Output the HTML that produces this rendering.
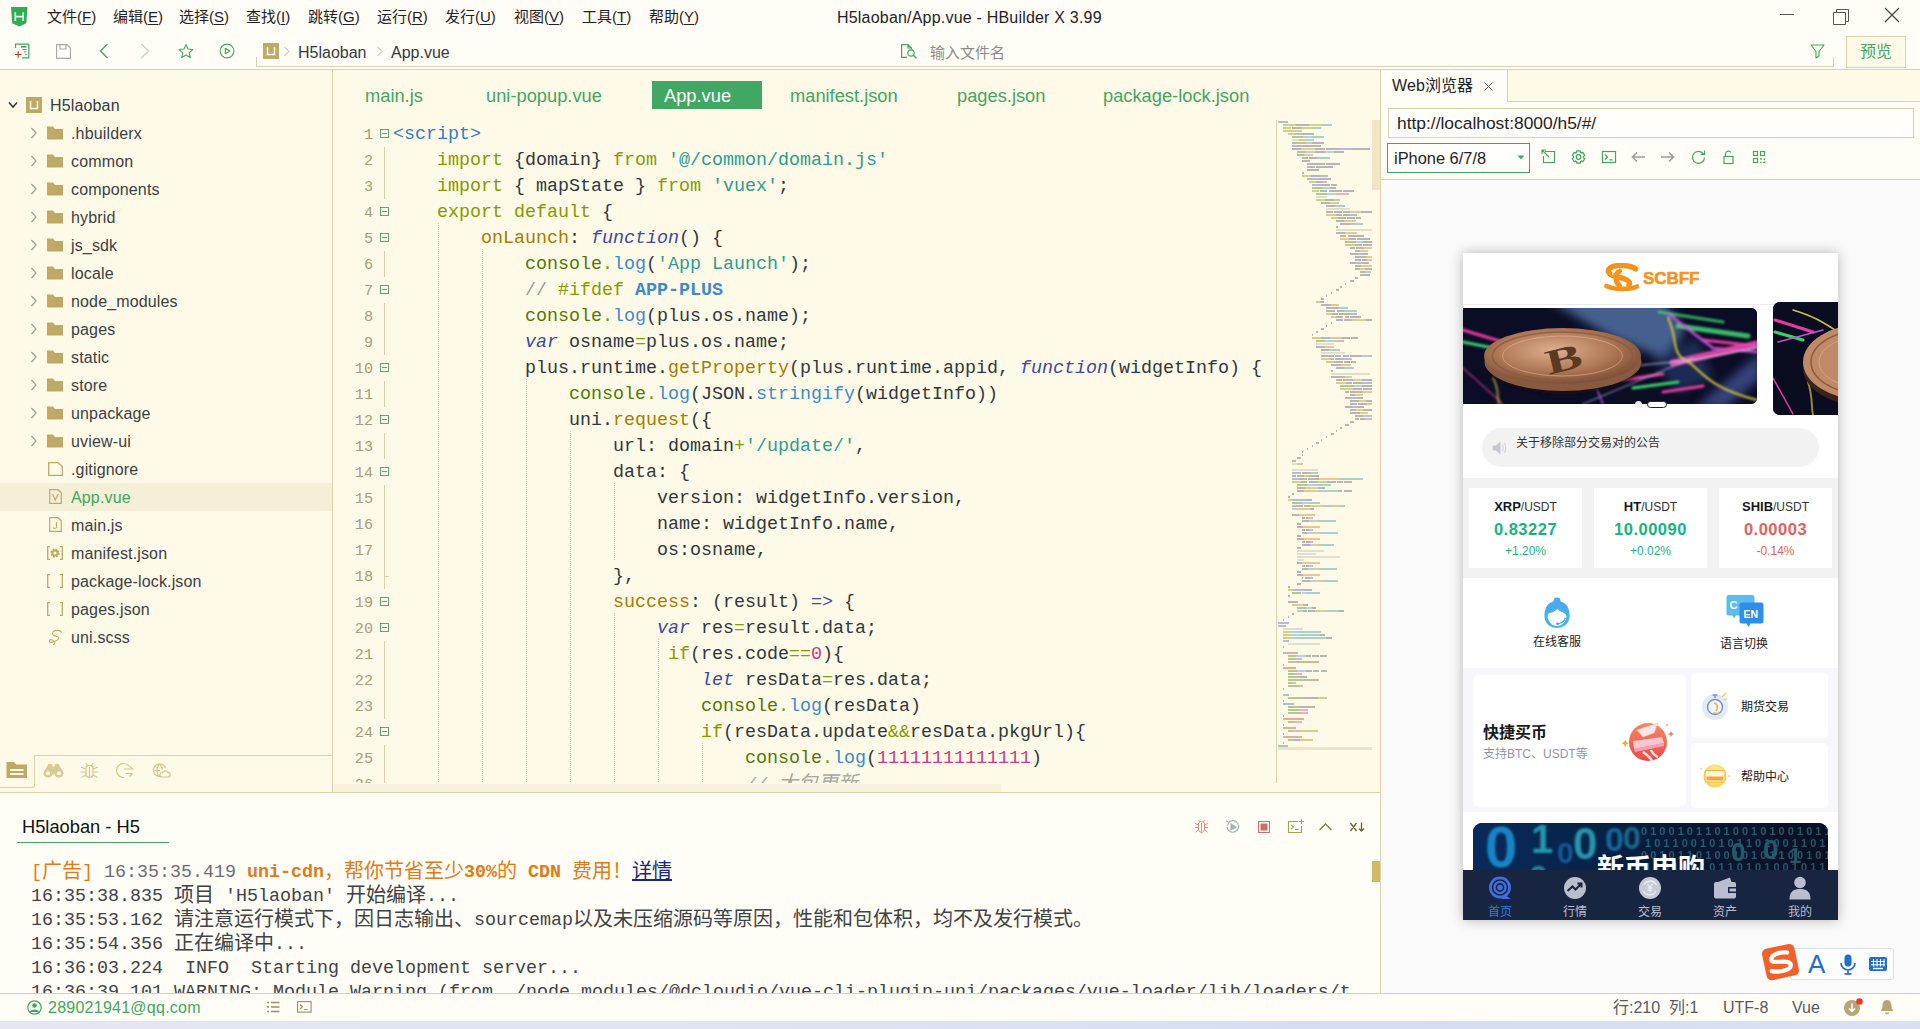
<!DOCTYPE html>
<html lang="zh-CN">
<head>
<meta charset="utf-8">
<title>H5laoban/App.vue - HBuilder X 3.99</title>
<style>
*{box-sizing:border-box}
html,body{margin:0;padding:0}
body{width:1920px;height:1029px;overflow:hidden;position:relative;background:#fffae8;font-family:"Liberation Sans","Noto Sans CJK SC",sans-serif;color:#333a3d}
.abs{position:absolute}
#top{position:absolute;left:0;top:0;width:1920px;height:69px;background:#fffdf6}
#topline{position:absolute;left:0;top:69px;width:1920px;height:1px;background:#dcd2aa}
.menu{position:absolute;top:6px;font-size:15px;line-height:22px;color:#1f2326;white-space:nowrap}
.menu u{text-decoration:underline;text-underline-offset:2px}
#title{position:absolute;top:7px;left:837px;font-size:16px;line-height:22px;color:#1f2326;letter-spacing:0.2px;white-space:nowrap}
.crumb{position:absolute;top:42px;font-size:16px;line-height:22px;color:#333a3d;white-space:nowrap}
/* sidebar */
#side{position:absolute;left:0;top:70px;width:332px;height:723px}
#sideline{position:absolute;left:332px;top:70px;width:1px;height:723px;background:#dcd2aa}
.tt{position:absolute;left:71px;height:28px;line-height:29px;font-size:16px;letter-spacing:0.15px;white-space:nowrap}
/* editor */
.tab{position:absolute;top:82px;height:27px;line-height:27px;font-size:18.3px;color:#3fa761;white-space:nowrap}
.ln{position:absolute;left:333px;width:40px;text-align:right;height:26px;line-height:27px;margin-top:3px;font-family:"Liberation Mono",monospace;font-size:15.2px;color:#a99c7c}
.cl{position:absolute;left:393px;height:26px;line-height:26px;margin-top:3px;font-family:"Liberation Mono","Noto Sans CJK SC",monospace;font-size:18.33px;color:#2e383c;white-space:pre}
.fb{position:absolute;left:380px;width:9px;height:9px;border:1px solid #55a873;background:#fffae8}
.fb:after{content:"";position:absolute;left:1px;top:3px;width:5px;height:1px;background:#55a873}
.fv{position:absolute;left:384px;width:1px;height:26px;background:#d9d0b0}
.ig{position:absolute;width:1px;height:26px;background-image:linear-gradient(#c9c6bb 50%,transparent 50%);background-size:1px 2px}
.k{color:#859900}.s{color:#2a9d8f}.f{color:#3a8bd0}.p{color:#a67c00}.i{color:#3b48a6;font-style:italic}.n{color:#d33682}.c{color:#9c9c94}.g{color:#4f7a05}.o{color:#859900}.t{color:#2f7fc4}.b{color:#3a8bd0;font-weight:bold}
.c2{color:#a8a8a0;font-style:italic}.c2z{color:#a8a8a0;font-style:italic;font-size:20px}
.tk{position:absolute;top:235px;width:113px;height:80px;background:#fff;text-align:center;white-space:nowrap}
.tk .t1{position:absolute;left:0;width:113px;top:10px;font-size:12px;line-height:18px;color:#333}
.tk .t1 b{font-size:13px;color:#15171f}
.tk .t2{position:absolute;left:0;width:113px;top:30px;font-size:16.500px;line-height:22px;font-weight:bold;letter-spacing:0.5px}
.tk .t3{position:absolute;left:0;width:113px;top:55px;font-size:12px;line-height:16px}
.tbl{position:absolute;top:651px;width:60px;text-align:center;font-size:12px;line-height:16px;color:#b9bfcc}
.cs{position:absolute;left:31px;height:24px;line-height:24px;font-family:"Liberation Mono","Noto Sans CJK SC",monospace;font-size:18.330px;color:#3e4346;white-space:pre}
.cs .z{font-size:20px;line-height:0;position:relative;top:1px}
</style>
</head>
<body>
<!-- ======= title bar / menu ======= -->
<div id="top"></div>
<div id="topline"></div>
<svg class="abs" style="left:11px;top:7px" width="17" height="20" viewBox="0 0 17 20"><path d="M0 0 H16.500 L15.300 16.300 L8.250 19.500 L1.200 16.300 Z" fill="#2fac54"/><path d="M4.300 5.200 V14 M12.200 5.200 V14 M4.300 9.600 H12.200" stroke="#eaf7ee" stroke-width="1.700" fill="none"/></svg>
<div class="menu" style="left:47px">文件(<u>F</u>)</div>
<div class="menu" style="left:113px">编辑(<u>E</u>)</div>
<div class="menu" style="left:179px">选择(<u>S</u>)</div>
<div class="menu" style="left:246px">查找(<u>I</u>)</div>
<div class="menu" style="left:308px">跳转(<u>G</u>)</div>
<div class="menu" style="left:377px">运行(<u>R</u>)</div>
<div class="menu" style="left:445px">发行(<u>U</u>)</div>
<div class="menu" style="left:514px">视图(<u>V</u>)</div>
<div class="menu" style="left:582px">工具(<u>T</u>)</div>
<div class="menu" style="left:649px">帮助(<u>Y</u>)</div>
<div id="title">H5laoban/App.vue - HBuilder X 3.99</div>
<!-- window controls -->
<svg class="abs" style="left:1775px;top:4px" width="130" height="24" viewBox="0 0 130 24"><path d="M5 10.5 H19" stroke="#555" stroke-width="1"/><path d="M58.5 8.5 H70.5 V20.5 H58.5 Z M61.5 8.5 V5.5 H73.5 V17.5 H70.5" fill="none" stroke="#555" stroke-width="1"/><path d="M110 4 L124 18 M124 4 L110 18" stroke="#444" stroke-width="1.2"/></svg>

<!-- ======= toolbar ======= -->
<svg class="abs" style="left:14px;top:43px" width="16" height="16" viewBox="0 0 16 16"><path d="M1.5 5 V1.2 H14.8 V14.8 H8" fill="none" stroke="#3fa761" stroke-width="1.2"/><path d="M7 3.8 H12.5" stroke="#3fa761" stroke-width="1.6"/><path d="M8.5 6.5 H12.5 M10 9 H12.5 M11 11.5 H12.5" stroke="#3fa761" stroke-width="1"/><path d="M1 11.5 H7.5 M4.2 8.2 V14.8" stroke="#c0392b" stroke-width="1.2"/></svg>
<svg class="abs" style="left:56px;top:44px" width="15" height="15" viewBox="0 0 15 15"><path d="M0.6 0.6 H11 L14.4 4 V14.4 H0.6 Z M4 0.6 V5 H10 V0.6" fill="none" stroke="#a8a8a8" stroke-width="1.1"/></svg>
<svg class="abs" style="left:99px;top:43px" width="10" height="16" viewBox="0 0 10 16"><path d="M8.5 1 L1.5 8 L8.5 15" fill="none" stroke="#3fa761" stroke-width="1.4"/></svg>
<svg class="abs" style="left:140px;top:43px" width="10" height="16" viewBox="0 0 10 16"><path d="M1.5 1 L8.5 8 L1.5 15" fill="none" stroke="#d0d0cc" stroke-width="1.4"/></svg>
<svg class="abs" style="left:178px;top:43px" width="16" height="16" viewBox="0 0 16 16"><path d="M8 1.5 L10 6 L14.8 6.5 L11.2 9.8 L12.3 14.6 L8 12.1 L3.7 14.6 L4.8 9.8 L1.2 6.5 L6 6 Z" fill="none" stroke="#3fa761" stroke-width="1.1" stroke-linejoin="round"/></svg>
<svg class="abs" style="left:219px;top:43px" width="16" height="16" viewBox="0 0 16 16"><circle cx="8" cy="8" r="6.9" fill="none" stroke="#3fa761" stroke-width="1.1"/><path d="M6.3 5.3 L10.8 8 L6.3 10.7 Z" fill="none" stroke="#3fa761" stroke-width="1.1" stroke-linejoin="round"/></svg>
<!-- search bracket -->
<div class="abs" style="left:256px;top:57px;width:1578px;height:10px;border:1px solid #d9d0b0;border-top:none"></div>
<div class="abs" style="left:263px;top:43px;width:16px;height:16px;background:#c0a964"></div>
<svg class="abs" style="left:263px;top:43px" width="16" height="16" viewBox="0 0 16 16"><path d="M4.5 4 V11.5 H11.5 V4" fill="none" stroke="#fffdf6" stroke-width="1.5"/></svg>
<svg class="abs" style="left:283px;top:46px" width="8" height="11" viewBox="0 0 8 11"><path d="M1.5 1 L6 5.5 L1.5 10" fill="none" stroke="#b0b0aa" stroke-width="1"/></svg>
<div class="crumb" style="left:298px">H5laoban</div>
<svg class="abs" style="left:376px;top:46px" width="8" height="11" viewBox="0 0 8 11"><path d="M1.5 1 L6 5.5 L1.5 10" fill="none" stroke="#b0b0aa" stroke-width="1"/></svg>
<div class="crumb" style="left:391px">App.vue</div>
<svg class="abs" style="left:900px;top:43px" width="18" height="16" viewBox="0 0 18 16"><path d="M7 14.3 H1.6 V1.6 H8 L11.5 5 V6.5 M8 1.6 V5 H11.5" fill="none" stroke="#3fa761" stroke-width="1.2"/><circle cx="11" cy="10" r="3.2" fill="none" stroke="#3fa761" stroke-width="1.2"/><path d="M13.3 12.3 L16.5 15.2" stroke="#3fa761" stroke-width="1.3"/></svg>
<div class="crumb" style="left:930px;color:#8c8c86;font-size:15px">输入文件名</div>
<svg class="abs" style="left:1810px;top:44px" width="15" height="15" viewBox="0 0 15 15"><path d="M1 1 H14 L9 7.5 V12 L6 14 V7.5 Z" fill="none" stroke="#3fa761" stroke-width="1.1" stroke-linejoin="round"/></svg>
<div class="abs" style="left:1846px;top:36px;width:60px;height:32px;border:1px solid #dcd2aa;background:#fffae8;color:#3fa761;font-size:16px;line-height:30px;text-align:center">预览</div>

<!-- ======= sidebar ======= -->
<div id="sideline"></div>
<svg class="abs" style="left:8px;top:101px" width="10" height="8" viewBox="0 0 10 8"><path d="M1 1.5 L5 6 L9 1.5" fill="none" stroke="#333" stroke-width="1.5"/></svg>
<div class="abs" style="left:26px;top:97px;width:16px;height:16px;background:#c0a964"></div>
<svg class="abs" style="left:26px;top:97px" width="16" height="16" viewBox="0 0 16 16"><path d="M4.5 4 V11.5 H11.5 V4" fill="none" stroke="#fffae8" stroke-width="1.5"/></svg>
<div class="tt" style="left:50px;top:91px">H5laoban</div>
<svg style="position:absolute;left:30px;top:127px" width="8" height="12" viewBox="0 0 8 12"><path d="M1.5 1 L6 6 L1.5 11" fill="none" stroke="#a9a08a" stroke-width="1.3"/></svg>
<svg style="position:absolute;left:47px;top:126px" width="16" height="14" viewBox="0 0 16 14"><path d="M0 0.5 H6 L8 3 H16 V13.5 H0 Z" fill="#c0a964"/></svg>
<div class="tt" style="top:119px;color:#3b4144">.hbuilderx</div>
<svg style="position:absolute;left:30px;top:155px" width="8" height="12" viewBox="0 0 8 12"><path d="M1.5 1 L6 6 L1.5 11" fill="none" stroke="#a9a08a" stroke-width="1.3"/></svg>
<svg style="position:absolute;left:47px;top:154px" width="16" height="14" viewBox="0 0 16 14"><path d="M0 0.5 H6 L8 3 H16 V13.5 H0 Z" fill="#c0a964"/></svg>
<div class="tt" style="top:147px;color:#3b4144">common</div>
<svg style="position:absolute;left:30px;top:183px" width="8" height="12" viewBox="0 0 8 12"><path d="M1.5 1 L6 6 L1.5 11" fill="none" stroke="#a9a08a" stroke-width="1.3"/></svg>
<svg style="position:absolute;left:47px;top:182px" width="16" height="14" viewBox="0 0 16 14"><path d="M0 0.5 H6 L8 3 H16 V13.5 H0 Z" fill="#c0a964"/></svg>
<div class="tt" style="top:175px;color:#3b4144">components</div>
<svg style="position:absolute;left:30px;top:211px" width="8" height="12" viewBox="0 0 8 12"><path d="M1.5 1 L6 6 L1.5 11" fill="none" stroke="#a9a08a" stroke-width="1.3"/></svg>
<svg style="position:absolute;left:47px;top:210px" width="16" height="14" viewBox="0 0 16 14"><path d="M0 0.5 H6 L8 3 H16 V13.5 H0 Z" fill="#c0a964"/></svg>
<div class="tt" style="top:203px;color:#3b4144">hybrid</div>
<svg style="position:absolute;left:30px;top:239px" width="8" height="12" viewBox="0 0 8 12"><path d="M1.5 1 L6 6 L1.5 11" fill="none" stroke="#a9a08a" stroke-width="1.3"/></svg>
<svg style="position:absolute;left:47px;top:238px" width="16" height="14" viewBox="0 0 16 14"><path d="M0 0.5 H6 L8 3 H16 V13.5 H0 Z" fill="#c0a964"/></svg>
<div class="tt" style="top:231px;color:#3b4144">js_sdk</div>
<svg style="position:absolute;left:30px;top:267px" width="8" height="12" viewBox="0 0 8 12"><path d="M1.5 1 L6 6 L1.5 11" fill="none" stroke="#a9a08a" stroke-width="1.3"/></svg>
<svg style="position:absolute;left:47px;top:266px" width="16" height="14" viewBox="0 0 16 14"><path d="M0 0.5 H6 L8 3 H16 V13.5 H0 Z" fill="#c0a964"/></svg>
<div class="tt" style="top:259px;color:#3b4144">locale</div>
<svg style="position:absolute;left:30px;top:295px" width="8" height="12" viewBox="0 0 8 12"><path d="M1.5 1 L6 6 L1.5 11" fill="none" stroke="#a9a08a" stroke-width="1.3"/></svg>
<svg style="position:absolute;left:47px;top:294px" width="16" height="14" viewBox="0 0 16 14"><path d="M0 0.5 H6 L8 3 H16 V13.5 H0 Z" fill="#c0a964"/></svg>
<div class="tt" style="top:287px;color:#3b4144">node_modules</div>
<svg style="position:absolute;left:30px;top:323px" width="8" height="12" viewBox="0 0 8 12"><path d="M1.5 1 L6 6 L1.5 11" fill="none" stroke="#a9a08a" stroke-width="1.3"/></svg>
<svg style="position:absolute;left:47px;top:322px" width="16" height="14" viewBox="0 0 16 14"><path d="M0 0.5 H6 L8 3 H16 V13.5 H0 Z" fill="#c0a964"/></svg>
<div class="tt" style="top:315px;color:#3b4144">pages</div>
<svg style="position:absolute;left:30px;top:351px" width="8" height="12" viewBox="0 0 8 12"><path d="M1.5 1 L6 6 L1.5 11" fill="none" stroke="#a9a08a" stroke-width="1.3"/></svg>
<svg style="position:absolute;left:47px;top:350px" width="16" height="14" viewBox="0 0 16 14"><path d="M0 0.5 H6 L8 3 H16 V13.5 H0 Z" fill="#c0a964"/></svg>
<div class="tt" style="top:343px;color:#3b4144">static</div>
<svg style="position:absolute;left:30px;top:379px" width="8" height="12" viewBox="0 0 8 12"><path d="M1.5 1 L6 6 L1.5 11" fill="none" stroke="#a9a08a" stroke-width="1.3"/></svg>
<svg style="position:absolute;left:47px;top:378px" width="16" height="14" viewBox="0 0 16 14"><path d="M0 0.5 H6 L8 3 H16 V13.5 H0 Z" fill="#c0a964"/></svg>
<div class="tt" style="top:371px;color:#3b4144">store</div>
<svg style="position:absolute;left:30px;top:407px" width="8" height="12" viewBox="0 0 8 12"><path d="M1.5 1 L6 6 L1.5 11" fill="none" stroke="#a9a08a" stroke-width="1.3"/></svg>
<svg style="position:absolute;left:47px;top:406px" width="16" height="14" viewBox="0 0 16 14"><path d="M0 0.5 H6 L8 3 H16 V13.5 H0 Z" fill="#c0a964"/></svg>
<div class="tt" style="top:399px;color:#3b4144">unpackage</div>
<svg style="position:absolute;left:30px;top:435px" width="8" height="12" viewBox="0 0 8 12"><path d="M1.5 1 L6 6 L1.5 11" fill="none" stroke="#a9a08a" stroke-width="1.3"/></svg>
<svg style="position:absolute;left:47px;top:434px" width="16" height="14" viewBox="0 0 16 14"><path d="M0 0.5 H6 L8 3 H16 V13.5 H0 Z" fill="#c0a964"/></svg>
<div class="tt" style="top:427px;color:#3b4144">uview-ui</div>
<svg style="position:absolute;left:48px;top:462px" width="15" height="14" viewBox="0 0 15 14"><path d="M0.7 0.7 H10 L14.3 4.5 V13.3 H0.7 Z" fill="none" stroke="#c0a964" stroke-width="1.3"/></svg>
<div class="tt" style="top:455px;color:#3b4144">.gitignore</div>
<div style="position:absolute;left:0;top:483px;width:332px;height:28px;background:#f5efd7"></div>
<svg style="position:absolute;left:49px;top:489px" width="13" height="15" viewBox="0 0 13 15"><path d="M0.7 0.7 H9 L12.3 3.7 V14.3 H0.7 Z" fill="none" stroke="#c0a964" stroke-width="1.2"/><path d="M3.5 5 L6.3 11 L9.2 5" fill="none" stroke="#c0a964" stroke-width="1.2"/></svg>
<div class="tt" style="top:483px;color:#3fa761">App.vue</div>
<svg style="position:absolute;left:49px;top:517px" width="13" height="15" viewBox="0 0 13 15"><path d="M0.7 0.7 H9 L12.3 3.7 V14.3 H0.7 Z" fill="none" stroke="#c0a964" stroke-width="1.2"/><path d="M7.5 5 V10 Q7.5 11.5 5.8 11.5 Q4.5 11.5 4.3 10.3" fill="none" stroke="#c0a964" stroke-width="1.2"/></svg>
<div class="tt" style="top:511px;color:#3b4144">main.js</div>
<svg style="position:absolute;left:47px;top:546px" width="16" height="14" viewBox="0 0 16 14"><path d="M3 0.7 H0.7 V13.3 H3 M13 0.7 H15.3 V13.3 H13" fill="none" stroke="#c0a964" stroke-width="1.3"/><circle cx="8" cy="7" r="3.600" fill="none" stroke="#c0a964" stroke-width="2" stroke-dasharray="1.700 1.130"/><circle cx="8" cy="7" r="2.500" fill="none" stroke="#c0a964" stroke-width="1.800"/></svg>
<div class="tt" style="top:539px;color:#3b4144">manifest.json</div>
<svg style="position:absolute;left:47px;top:574px" width="16" height="14" viewBox="0 0 16 14"><path d="M3 0.7 H0.7 V13.3 H3 M13 0.7 H15.3 V13.3 H13" fill="none" stroke="#c0a964" stroke-width="1.3"/></svg>
<div class="tt" style="top:567px;color:#3b4144">package-lock.json</div>
<svg style="position:absolute;left:47px;top:602px" width="16" height="14" viewBox="0 0 16 14"><path d="M3 0.7 H0.7 V13.3 H3 M13 0.7 H15.3 V13.3 H13" fill="none" stroke="#c0a964" stroke-width="1.3"/></svg>
<div class="tt" style="top:595px;color:#3b4144">pages.json</div>
<svg style="position:absolute;left:48px;top:629px" width="14" height="16" viewBox="0 0 14 16"><path d="M13.500 3.500 C12.500 0.500 5 0.500 4.500 4.500 C4.200 7.500 9.500 7 10.500 8.500 C11.500 10.500 8 12 5 13 C2.500 14 1 13 1.500 11.500 C2 10 5 10.500 6.500 12.500 C7.500 14 6.500 15.500 5 15.500" fill="none" stroke="#c0a964" stroke-width="1.100"/></svg>
<div class="tt" style="top:623px;color:#3b4144">uni.scss</div>
<!-- sidebar bottom tools -->
<div class="abs" style="left:0;top:755px;width:332px;height:1px;background:#dcd2aa"></div>
<div class="abs" style="left:0;top:755px;width:35px;height:33px;background:#fffae8;border-right:1px solid #dcd2aa;border-bottom:1px solid #dcd2aa;border-bottom-right-radius:3px"></div>
<svg class="abs" style="left:6px;top:761px" width="22" height="18" viewBox="0 0 22 18"><path d="M0.5 1 H8 L10 3.5 H21 V17 H0.5 Z" fill="#c0a964"/><path d="M4 9 H17.5 M4 13 H17.5" stroke="#fffae8" stroke-width="1.8"/></svg>
<svg class="abs" style="left:43px;top:763px" width="21" height="15" viewBox="0 0 21 15"><g fill="#dcca94" stroke="#dcca94" stroke-width="1"><path d="M3 6.500 L5.500 1.500 H8.500 L9.500 4.500 H11.500 L12.500 1.500 H15.500 L18 6.500 L20 11 H1 Z"/><circle cx="5" cy="10.200" r="4"/><circle cx="16" cy="10.200" r="4"/></g><circle cx="5" cy="10.200" r="2" fill="#fffae8"/><circle cx="16" cy="10.200" r="2" fill="#fffae8"/></svg>
<svg class="abs" style="left:80px;top:762px" width="19" height="17" viewBox="0 0 19 17"><g fill="none" stroke="#d8c48c" stroke-width="1.2"><path d="M6 5.5 C6 3 13 3 13 5.5 V12 C13 16.5 6 16.5 6 12 Z M9.5 5 V15.5 M6 1 L7.5 3.5 M13 1 L11.5 3.5 M1 5 L6 7 M18 5 L13 7 M0.5 10 H6 M18.5 10 H13 M1.5 15.5 L6 13 M17.5 15.5 L13 13"/></g></svg>
<svg class="abs" style="left:115px;top:762px" width="20" height="17" viewBox="0 0 20 17"><g fill="none" stroke="#d8c48c" stroke-width="1.2"><path d="M14 4 A7 7 0 1 0 9 15.5 M9 7 H17.5 L14.5 4 M17.5 11.5 H10.5 M17.5 11.5 L14.5 14.5"/></g></svg>
<svg class="abs" style="left:152px;top:763px" width="19" height="15" viewBox="0 0 19 15"><g fill="none" stroke="#d8c48c" stroke-width="1.2"><path d="M8 13.5 A6.3 6.3 0 1 1 13.6 5 M1.3 7.5 H8 M7.5 1.2 C4 4 4 10.5 7.5 13.5 M7.5 1.2 C9.5 3 10.5 5 10.5 6.5"/><path d="M9.5 14 H16 A2.3 2.3 0 0 0 16 9.4 A3 3 0 0 0 10.5 9.8 A2.1 2.1 0 0 0 9.5 14 Z"/></g></svg>

<!-- ======= editor ======= -->
<div class="tab" style="left:365px">main.js</div>
<div class="tab" style="left:486px">uni-popup.vue</div>
<div class="abs" style="left:652px;top:81px;width:110px;height:28px;background:#41a863"></div>
<div class="tab" style="left:664px;color:#fff">App.vue</div>
<div class="tab" style="left:790px">manifest.json</div>
<div class="tab" style="left:957px">pages.json</div>
<div class="tab" style="left:1103px">package-lock.json</div>
<div class="ln" style="top:119px">1</div>
<div class="fb" style="top:129px"></div>
<div class="cl" style="top:119px"><span class="t">&lt;script&gt;</span></div>
<div class="ln" style="top:145px">2</div>
<div class="cl" style="top:145px">    <span class="k">import</span> {domain} <span class="k">from</span> <span class="s">&#x27;@/common/domain.js&#x27;</span></div>
<div class="ln" style="top:171px">3</div>
<div class="cl" style="top:171px">    <span class="k">import</span> { mapState } <span class="k">from</span> <span class="s">&#x27;vuex&#x27;</span>;</div>
<div class="ln" style="top:197px">4</div>
<div class="fb" style="top:207px"></div>
<div class="cl" style="top:197px">    <span class="k">export</span> <span class="k">default</span> {</div>
<div class="ln" style="top:223px">5</div>
<div class="fb" style="top:233px"></div>
<div class="cl" style="top:223px">        <span class="p">onLaunch</span>: <span class="i">function</span>() {</div>
<div class="ln" style="top:249px">6</div>
<div class="cl" style="top:249px">            <span class="g">console</span><span class="o">.</span><span class="f">log</span>(<span class="s">&#x27;App Launch&#x27;</span>);</div>
<div class="ln" style="top:275px">7</div>
<div class="fb" style="top:285px"></div>
<div class="cl" style="top:275px">            <span class="c">// </span><span class="k">#ifdef</span> <span class="b">APP-PLUS</span></div>
<div class="ln" style="top:301px">8</div>
<div class="cl" style="top:301px">            <span class="g">console</span><span class="o">.</span><span class="f">log</span>(plus.os.name);</div>
<div class="ln" style="top:327px">9</div>
<div class="cl" style="top:327px">            <span class="i">var</span> osname<span class="o">=</span>plus.os.name;</div>
<div class="ln" style="top:353px">10</div>
<div class="fb" style="top:363px"></div>
<div class="cl" style="top:353px">            plus.runtime.<span class="p">getProperty</span>(plus.runtime.appid, <span class="i">function</span>(widgetInfo) {</div>
<div class="ln" style="top:379px">11</div>
<div class="cl" style="top:379px">                <span class="g">console</span><span class="o">.</span><span class="f">log</span>(JSON.<span class="f">stringify</span>(widgetInfo))</div>
<div class="ln" style="top:405px">12</div>
<div class="fb" style="top:415px"></div>
<div class="cl" style="top:405px">                uni.<span class="p">request</span>({</div>
<div class="ln" style="top:431px">13</div>
<div class="cl" style="top:431px">                    url: domain<span class="o">+</span><span class="s">&#x27;/update/&#x27;</span>,</div>
<div class="ln" style="top:457px">14</div>
<div class="fb" style="top:467px"></div>
<div class="cl" style="top:457px">                    data: {</div>
<div class="ln" style="top:483px">15</div>
<div class="cl" style="top:483px">                        version: widgetInfo.version,</div>
<div class="ln" style="top:509px">16</div>
<div class="cl" style="top:509px">                        name: widgetInfo.name,</div>
<div class="ln" style="top:535px">17</div>
<div class="cl" style="top:535px">                        os:osname,</div>
<div class="ln" style="top:561px">18</div>
<div class="cl" style="top:561px">                    },</div>
<div class="ln" style="top:587px">19</div>
<div class="fb" style="top:597px"></div>
<div class="cl" style="top:587px">                    <span class="p">success</span>: (result) <span class="i">=&gt;</span> {</div>
<div class="ln" style="top:613px">20</div>
<div class="fb" style="top:623px"></div>
<div class="cl" style="top:613px">                        <span class="i">var</span> res<span class="o">=</span>result.data;</div>
<div class="ln" style="top:639px">21</div>
<div class="cl" style="top:639px">                         <span class="k">if</span>(res.code<span class="o">==</span><span class="n">0</span>){</div>
<div class="ln" style="top:665px">22</div>
<div class="cl" style="top:665px">                            <span class="i">let</span> resData<span class="o">=</span>res.data;</div>
<div class="ln" style="top:691px">23</div>
<div class="cl" style="top:691px">                            <span class="g">console</span><span class="o">.</span><span class="f">log</span>(resData)</div>
<div class="ln" style="top:717px">24</div>
<div class="fb" style="top:727px"></div>
<div class="cl" style="top:717px">                            <span class="k">if</span>(resData.update<span class="o">&amp;&amp;</span>resData.pkgUrl){</div>
<div class="ln" style="top:743px">25</div>
<div class="cl" style="top:743px">                                <span class="g">console</span><span class="o">.</span><span class="f">log</span>(<span class="n">11111111111111</span>)</div>
<div class="ln" style="top:769px">26</div>
<div class="cl" style="top:769px">                                <span class="c2">// </span><span class="c2z">大包更新</span></div>
<div class="fv" style="top:147px"></div>
<div class="fv" style="top:173px"></div>
<div class="fv" style="top:251px"></div>
<div class="fv" style="top:303px"></div>
<div class="fv" style="top:329px"></div>
<div class="fv" style="top:381px"></div>
<div class="fv" style="top:433px"></div>
<div class="fv" style="top:485px"></div>
<div class="fv" style="top:511px"></div>
<div class="fv" style="top:537px"></div>
<div class="fv" style="top:563px"></div>
<div class="fv" style="top:641px"></div>
<div class="fv" style="top:667px"></div>
<div class="fv" style="top:693px"></div>
<div class="fv" style="top:745px"></div>
<div class="fv" style="top:771px"></div>
<div style="position:absolute;left:384px;top:576px;width:5px;height:1px;background:#d9d0b0"></div>
<div class="ig" style="left:438px;top:223px"></div>
<div class="ig" style="left:438px;top:249px"></div>
<div class="ig" style="left:482px;top:249px"></div>
<div class="ig" style="left:438px;top:275px"></div>
<div class="ig" style="left:482px;top:275px"></div>
<div class="ig" style="left:438px;top:301px"></div>
<div class="ig" style="left:482px;top:301px"></div>
<div class="ig" style="left:438px;top:327px"></div>
<div class="ig" style="left:482px;top:327px"></div>
<div class="ig" style="left:438px;top:353px"></div>
<div class="ig" style="left:482px;top:353px"></div>
<div class="ig" style="left:438px;top:379px"></div>
<div class="ig" style="left:482px;top:379px"></div>
<div class="ig" style="left:526px;top:379px"></div>
<div class="ig" style="left:438px;top:405px"></div>
<div class="ig" style="left:482px;top:405px"></div>
<div class="ig" style="left:526px;top:405px"></div>
<div class="ig" style="left:438px;top:431px"></div>
<div class="ig" style="left:482px;top:431px"></div>
<div class="ig" style="left:526px;top:431px"></div>
<div class="ig" style="left:570px;top:431px"></div>
<div class="ig" style="left:438px;top:457px"></div>
<div class="ig" style="left:482px;top:457px"></div>
<div class="ig" style="left:526px;top:457px"></div>
<div class="ig" style="left:570px;top:457px"></div>
<div class="ig" style="left:438px;top:483px"></div>
<div class="ig" style="left:482px;top:483px"></div>
<div class="ig" style="left:526px;top:483px"></div>
<div class="ig" style="left:570px;top:483px"></div>
<div class="ig" style="left:614px;top:483px"></div>
<div class="ig" style="left:438px;top:509px"></div>
<div class="ig" style="left:482px;top:509px"></div>
<div class="ig" style="left:526px;top:509px"></div>
<div class="ig" style="left:570px;top:509px"></div>
<div class="ig" style="left:614px;top:509px"></div>
<div class="ig" style="left:438px;top:535px"></div>
<div class="ig" style="left:482px;top:535px"></div>
<div class="ig" style="left:526px;top:535px"></div>
<div class="ig" style="left:570px;top:535px"></div>
<div class="ig" style="left:614px;top:535px"></div>
<div class="ig" style="left:438px;top:561px"></div>
<div class="ig" style="left:482px;top:561px"></div>
<div class="ig" style="left:526px;top:561px"></div>
<div class="ig" style="left:570px;top:561px"></div>
<div class="ig" style="left:438px;top:587px"></div>
<div class="ig" style="left:482px;top:587px"></div>
<div class="ig" style="left:526px;top:587px"></div>
<div class="ig" style="left:570px;top:587px"></div>
<div class="ig" style="left:438px;top:613px"></div>
<div class="ig" style="left:482px;top:613px"></div>
<div class="ig" style="left:526px;top:613px"></div>
<div class="ig" style="left:570px;top:613px"></div>
<div class="ig" style="left:614px;top:613px"></div>
<div class="ig" style="left:438px;top:639px"></div>
<div class="ig" style="left:482px;top:639px"></div>
<div class="ig" style="left:526px;top:639px"></div>
<div class="ig" style="left:570px;top:639px"></div>
<div class="ig" style="left:614px;top:639px"></div>
<div class="ig" style="left:658px;top:639px"></div>
<div class="ig" style="left:438px;top:665px"></div>
<div class="ig" style="left:482px;top:665px"></div>
<div class="ig" style="left:526px;top:665px"></div>
<div class="ig" style="left:570px;top:665px"></div>
<div class="ig" style="left:614px;top:665px"></div>
<div class="ig" style="left:658px;top:665px"></div>
<div class="ig" style="left:438px;top:691px"></div>
<div class="ig" style="left:482px;top:691px"></div>
<div class="ig" style="left:526px;top:691px"></div>
<div class="ig" style="left:570px;top:691px"></div>
<div class="ig" style="left:614px;top:691px"></div>
<div class="ig" style="left:658px;top:691px"></div>
<div class="ig" style="left:438px;top:717px"></div>
<div class="ig" style="left:482px;top:717px"></div>
<div class="ig" style="left:526px;top:717px"></div>
<div class="ig" style="left:570px;top:717px"></div>
<div class="ig" style="left:614px;top:717px"></div>
<div class="ig" style="left:658px;top:717px"></div>
<div class="ig" style="left:438px;top:743px"></div>
<div class="ig" style="left:482px;top:743px"></div>
<div class="ig" style="left:526px;top:743px"></div>
<div class="ig" style="left:570px;top:743px"></div>
<div class="ig" style="left:614px;top:743px"></div>
<div class="ig" style="left:658px;top:743px"></div>
<div class="ig" style="left:702px;top:743px"></div>
<div class="ig" style="left:438px;top:769px"></div>
<div class="ig" style="left:482px;top:769px"></div>
<div class="ig" style="left:526px;top:769px"></div>
<div class="ig" style="left:570px;top:769px"></div>
<div class="ig" style="left:614px;top:769px"></div>
<div class="ig" style="left:658px;top:769px"></div>
<div class="ig" style="left:702px;top:769px"></div>
<!-- minimap -->
<div class="abs" style="left:1276px;top:120px;width:1px;height:672px;background:#d9d0b0"></div>
<svg class="mm" width="1920" height="800" style="position:absolute;left:0;top:0" shape-rendering="crispEdges"><rect x="1278.1" y="121" width="9.6" height="2" fill="#abc0dd"/><rect x="1282.8" y="124" width="13.6" height="2" fill="#cfd185"/><rect x="1296.4" y="124" width="12.1" height="2" fill="#b7b6b4"/><rect x="1308.5" y="124" width="13.7" height="2" fill="#cfd185"/><rect x="1322.2" y="124" width="9.8" height="2" fill="#a8d2c7"/><rect x="1282.8" y="127" width="8.6" height="2" fill="#cfd185"/><rect x="1291.5" y="127" width="10.6" height="2" fill="#b7b6b4"/><rect x="1302.0" y="127" width="11.6" height="2" fill="#cfd185"/><rect x="1313.6" y="127" width="7.1" height="2" fill="#a8d2c7"/><rect x="1282.8" y="130" width="9.2" height="2" fill="#cfd185"/><rect x="1292.1" y="130" width="10.0" height="2" fill="#cfd185"/><rect x="1287.8" y="133" width="7.2" height="2" fill="#e3c994"/><rect x="1294.9" y="133" width="8.1" height="2" fill="#b2bbdf"/><rect x="1303.1" y="133" width="10.8" height="2" fill="#b7b6b4"/><rect x="1292.0" y="136" width="10.8" height="2" fill="#b3c890"/><rect x="1302.8" y="136" width="9.2" height="2" fill="#b1d2e6"/><rect x="1312.0" y="136" width="11.5" height="2" fill="#a8d2c7"/><rect x="1292.0" y="139" width="7.2" height="2" fill="#deded1"/><rect x="1299.2" y="139" width="8.7" height="2" fill="#cfd185"/><rect x="1308.0" y="139" width="5.9" height="2" fill="#b1d2e6"/><rect x="1292.0" y="142" width="13.6" height="2" fill="#b3c890"/><rect x="1305.6" y="142" width="6.3" height="2" fill="#b1d2e6"/><rect x="1311.9" y="142" width="11.6" height="2" fill="#b7b6b4"/><rect x="1292.0" y="145" width="10.7" height="2" fill="#b2bbdf"/><rect x="1302.8" y="145" width="18.6" height="2" fill="#b7b6b4"/><rect x="1292.0" y="148" width="9.4" height="2" fill="#b7b6b4"/><rect x="1301.4" y="148" width="13.5" height="2" fill="#e3c994"/><rect x="1314.9" y="148" width="10.2" height="2" fill="#b7b6b4"/><rect x="1326.3" y="148" width="13.7" height="2" fill="#b7b6b4"/><rect x="1340.0" y="148" width="11.5" height="2" fill="#b2bbdf"/><rect x="1351.5" y="148" width="18.4" height="2" fill="#b7b6b4"/><rect x="1297.2" y="151" width="7.8" height="2" fill="#b3c890"/><rect x="1305.0" y="151" width="9.5" height="2" fill="#b1d2e6"/><rect x="1314.5" y="151" width="10.0" height="2" fill="#b7b6b4"/><rect x="1324.5" y="151" width="9.2" height="2" fill="#b1d2e6"/><rect x="1333.7" y="151" width="10.1" height="2" fill="#b7b6b4"/><rect x="1297.2" y="154" width="6.9" height="2" fill="#b7b6b4"/><rect x="1304.1" y="154" width="8.7" height="2" fill="#e3c994"/><rect x="1302.1" y="157" width="6.1" height="2" fill="#b7b6b4"/><rect x="1309.4" y="157" width="7.6" height="2" fill="#b7b6b4"/><rect x="1317.0" y="157" width="12.9" height="2" fill="#a8d2c7"/><rect x="1302.1" y="160" width="7.5" height="2" fill="#b7b6b4"/><rect x="1307.0" y="163" width="18.1" height="2" fill="#b7b6b4"/><rect x="1326.3" y="163" width="13.7" height="2" fill="#b7b6b4"/><rect x="1307.0" y="166" width="8.0" height="2" fill="#b7b6b4"/><rect x="1316.2" y="166" width="16.4" height="2" fill="#b7b6b4"/><rect x="1307.0" y="169" width="12.2" height="2" fill="#b7b6b4"/><rect x="1302.1" y="172" width="1.7" height="2" fill="#b7b6b4"/><rect x="1302.1" y="175" width="8.8" height="2" fill="#e3c994"/><rect x="1310.9" y="175" width="10.1" height="2" fill="#b7b6b4"/><rect x="1321.0" y="175" width="6.7" height="2" fill="#b2bbdf"/><rect x="1307.0" y="178" width="12.2" height="2" fill="#b2bbdf"/><rect x="1319.2" y="178" width="11.8" height="2" fill="#b7b6b4"/><rect x="1308.5" y="181" width="7.4" height="2" fill="#cfd185"/><rect x="1315.9" y="181" width="7.2" height="2" fill="#b7b6b4"/><rect x="1323.1" y="181" width="3.6" height="2" fill="#ebb0c3"/><rect x="1312.1" y="184" width="9.4" height="2" fill="#b2bbdf"/><rect x="1321.5" y="184" width="8.6" height="2" fill="#b7b6b4"/><rect x="1331.4" y="184" width="5.6" height="2" fill="#b7b6b4"/><rect x="1312.1" y="187" width="10.4" height="2" fill="#b3c890"/><rect x="1322.6" y="187" width="7.5" height="2" fill="#b1d2e6"/><rect x="1330.0" y="187" width="5.9" height="2" fill="#b7b6b4"/><rect x="1312.1" y="190" width="7.3" height="2" fill="#cfd185"/><rect x="1319.5" y="190" width="7.9" height="2" fill="#b7b6b4"/><rect x="1328.6" y="190" width="13.5" height="2" fill="#b7b6b4"/><rect x="1343.3" y="190" width="10.5" height="2" fill="#b7b6b4"/><rect x="1316.0" y="193" width="11.0" height="2" fill="#b3c890"/><rect x="1326.9" y="193" width="9.4" height="2" fill="#b1d2e6"/><rect x="1336.3" y="193" width="12.4" height="2" fill="#ebb0c3"/><rect x="1316.0" y="196" width="10.7" height="2" fill="#deded1"/><rect x="1316.0" y="199" width="9.5" height="2" fill="#cfd185"/><rect x="1325.4" y="199" width="8.9" height="2" fill="#b7b6b4"/><rect x="1334.4" y="199" width="5.2" height="2" fill="#a8d2c7"/><rect x="1320.9" y="202" width="9.3" height="2" fill="#b7b6b4"/><rect x="1330.2" y="202" width="8.7" height="2" fill="#e3c994"/><rect x="1326.0" y="205" width="9.2" height="2" fill="#b7b6b4"/><rect x="1335.2" y="205" width="9.6" height="2" fill="#a8d2c7"/><rect x="1326.0" y="208" width="23.7" height="2" fill="#deded1"/><rect x="1326.0" y="211" width="7.0" height="2" fill="#b7b6b4"/><rect x="1334.2" y="211" width="7.6" height="2" fill="#b7b6b4"/><rect x="1343.0" y="211" width="7.0" height="2" fill="#b7b6b4"/><rect x="1350.0" y="211" width="10.6" height="2" fill="#e3c994"/><rect x="1360.6" y="211" width="11.4" height="2" fill="#b7b6b4"/><rect x="1326.0" y="214" width="10.2" height="2" fill="#e3c994"/><rect x="1336.2" y="214" width="5.5" height="2" fill="#b7b6b4"/><rect x="1342.9" y="214" width="6.8" height="2" fill="#b7b6b4"/><rect x="1349.7" y="214" width="7.0" height="2" fill="#b2bbdf"/><rect x="1331.0" y="217" width="6.9" height="2" fill="#cfd185"/><rect x="1337.9" y="217" width="8.2" height="2" fill="#b7b6b4"/><rect x="1347.3" y="217" width="7.4" height="2" fill="#b7b6b4"/><rect x="1355.9" y="217" width="5.0" height="2" fill="#b7b6b4"/><rect x="1335.9" y="220" width="7.9" height="2" fill="#b7b6b4"/><rect x="1343.8" y="220" width="11.7" height="2" fill="#e3c994"/><rect x="1339.9" y="223" width="11.1" height="2" fill="#b7b6b4"/><rect x="1351.0" y="223" width="11.6" height="2" fill="#a8d2c7"/><rect x="1335.9" y="226" width="2.1" height="2" fill="#b7b6b4"/><rect x="1335.9" y="229" width="36.1" height="2" fill="#deded1"/><rect x="1335.9" y="232" width="9.4" height="2" fill="#b7b6b4"/><rect x="1345.3" y="232" width="11.4" height="2" fill="#e3c994"/><rect x="1339.9" y="235" width="6.5" height="2" fill="#b7b6b4"/><rect x="1347.7" y="235" width="16.0" height="2" fill="#b7b6b4"/><rect x="1339.9" y="238" width="9.4" height="2" fill="#e3c994"/><rect x="1349.3" y="238" width="6.7" height="2" fill="#b7b6b4"/><rect x="1357.2" y="238" width="12.6" height="2" fill="#b7b6b4"/><rect x="1344.9" y="241" width="11.0" height="2" fill="#b3c890"/><rect x="1355.9" y="241" width="6.6" height="2" fill="#b1d2e6"/><rect x="1362.5" y="241" width="9.5" height="2" fill="#b7b6b4"/><rect x="1344.9" y="244" width="9.7" height="2" fill="#cfd185"/><rect x="1354.6" y="244" width="7.0" height="2" fill="#b7b6b4"/><rect x="1362.7" y="244" width="9.3" height="2" fill="#b7b6b4"/><rect x="1349.8" y="247" width="5.1" height="2" fill="#b7b6b4"/><rect x="1356.1" y="247" width="7.4" height="2" fill="#b7b6b4"/><rect x="1363.5" y="247" width="8.6" height="2" fill="#e3c994"/><rect x="1354.9" y="250" width="5.5" height="2" fill="#b7b6b4"/><rect x="1360.4" y="250" width="7.3" height="2" fill="#e3c994"/><rect x="1349.8" y="253" width="8.3" height="2" fill="#b7b6b4"/><rect x="1358.1" y="253" width="5.3" height="2" fill="#b2bbdf"/><rect x="1363.4" y="253" width="4.3" height="2" fill="#b7b6b4"/><rect x="1354.9" y="256" width="11.0" height="2" fill="#b7b6b4"/><rect x="1366.0" y="256" width="6.1" height="2" fill="#e3c994"/><rect x="1354.9" y="259" width="6.1" height="2" fill="#b7b6b4"/><rect x="1362.2" y="259" width="4.9" height="2" fill="#b7b6b4"/><rect x="1367.1" y="259" width="4.9" height="2" fill="#e3c994"/><rect x="1349.8" y="262" width="5.3" height="2" fill="#b7b6b4"/><rect x="1355.1" y="262" width="6.7" height="2" fill="#b2bbdf"/><rect x="1361.8" y="262" width="7.0" height="2" fill="#b7b6b4"/><rect x="1354.9" y="265" width="5.8" height="2" fill="#b7b6b4"/><rect x="1360.7" y="265" width="11.3" height="2" fill="#e3c994"/><rect x="1354.9" y="268" width="5.1" height="2" fill="#b7b6b4"/><rect x="1360.1" y="268" width="5.3" height="2" fill="#e3c994"/><rect x="1365.4" y="268" width="6.6" height="2" fill="#b7b6b4"/><rect x="1359.8" y="271" width="4.8" height="2" fill="#b7b6b4"/><rect x="1364.6" y="271" width="6.3" height="2" fill="#a8d2c7"/><rect x="1359.8" y="274" width="10.1" height="2" fill="#b7b6b4"/><rect x="1354.9" y="277" width="2.8" height="2" fill="#b7b6b4"/><rect x="1349.8" y="280" width="4.1" height="2" fill="#b7b6b4"/><rect x="1344.9" y="283" width="1.2" height="2" fill="#b7b6b4"/><rect x="1339.9" y="286" width="1.7" height="2" fill="#b7b6b4"/><rect x="1335.9" y="289" width="3.0" height="2" fill="#b7b6b4"/><rect x="1331.0" y="292" width="1.2" height="2" fill="#b7b6b4"/><rect x="1326.0" y="295" width="1.2" height="2" fill="#b7b6b4"/><rect x="1320.9" y="298" width="3.0" height="2" fill="#b7b6b4"/><rect x="1316.0" y="301" width="3.6" height="2" fill="#cfd185"/><rect x="1319.6" y="301" width="4.3" height="2" fill="#b7b6b4"/><rect x="1320.9" y="304" width="9.6" height="2" fill="#b7b6b4"/><rect x="1330.5" y="304" width="8.4" height="2" fill="#e3c994"/><rect x="1326.0" y="307" width="13.0" height="2" fill="#b7b6b4"/><rect x="1339.0" y="307" width="8.6" height="2" fill="#a8d2c7"/><rect x="1326.0" y="310" width="9.4" height="2" fill="#b7b6b4"/><rect x="1336.6" y="310" width="7.6" height="2" fill="#b7b6b4"/><rect x="1344.3" y="310" width="12.4" height="2" fill="#a8d2c7"/><rect x="1326.0" y="313" width="6.1" height="2" fill="#e3c994"/><rect x="1332.2" y="313" width="5.6" height="2" fill="#b7b6b4"/><rect x="1339.0" y="313" width="11.5" height="2" fill="#b7b6b4"/><rect x="1350.5" y="313" width="6.1" height="2" fill="#b2bbdf"/><rect x="1331.0" y="316" width="5.3" height="2" fill="#cfd185"/><rect x="1336.2" y="316" width="7.0" height="2" fill="#b7b6b4"/><rect x="1344.5" y="316" width="4.1" height="2" fill="#b7b6b4"/><rect x="1349.7" y="316" width="11.2" height="2" fill="#b7b6b4"/><rect x="1335.9" y="319" width="6.8" height="2" fill="#b7b6b4"/><rect x="1343.8" y="319" width="8.2" height="2" fill="#b7b6b4"/><rect x="1352.1" y="319" width="13.4" height="2" fill="#e3c994"/><rect x="1365.5" y="319" width="6.6" height="2" fill="#b7b6b4"/><rect x="1331.0" y="322" width="1.2" height="2" fill="#b7b6b4"/><rect x="1326.0" y="325" width="1.2" height="2" fill="#b7b6b4"/><rect x="1320.9" y="328" width="3.0" height="2" fill="#b7b6b4"/><rect x="1316.0" y="331" width="2.1" height="2" fill="#b7b6b4"/><rect x="1312.1" y="334" width="1.2" height="2" fill="#b7b6b4"/><rect x="1312.1" y="337" width="8.6" height="2" fill="#cfd185"/><rect x="1320.7" y="337" width="9.6" height="2" fill="#b7b6b4"/><rect x="1330.3" y="337" width="11.8" height="2" fill="#cfd185"/><rect x="1342.1" y="337" width="7.4" height="2" fill="#b7b6b4"/><rect x="1350.8" y="337" width="6.9" height="2" fill="#b7b6b4"/><rect x="1316.0" y="340" width="8.9" height="2" fill="#b3c890"/><rect x="1324.9" y="340" width="11.1" height="2" fill="#b1d2e6"/><rect x="1336.1" y="340" width="7.7" height="2" fill="#ebb0c3"/><rect x="1316.0" y="343" width="17.8" height="2" fill="#deded1"/><rect x="1316.0" y="346" width="8.8" height="2" fill="#b7b6b4"/><rect x="1324.8" y="346" width="9.0" height="2" fill="#e3c994"/><rect x="1320.9" y="349" width="8.2" height="2" fill="#b7b6b4"/><rect x="1329.1" y="349" width="10.8" height="2" fill="#a8d2c7"/><rect x="1320.9" y="352" width="24.0" height="2" fill="#deded1"/><rect x="1320.9" y="355" width="12.6" height="2" fill="#b7b6b4"/><rect x="1334.7" y="355" width="6.6" height="2" fill="#b7b6b4"/><rect x="1342.5" y="355" width="6.3" height="2" fill="#b7b6b4"/><rect x="1350.0" y="355" width="11.9" height="2" fill="#b7b6b4"/><rect x="1361.9" y="355" width="10.1" height="2" fill="#a8d2c7"/><rect x="1320.9" y="358" width="8.6" height="2" fill="#e3c994"/><rect x="1329.5" y="358" width="4.4" height="2" fill="#b7b6b4"/><rect x="1335.1" y="358" width="8.2" height="2" fill="#b7b6b4"/><rect x="1343.2" y="358" width="8.7" height="2" fill="#b2bbdf"/><rect x="1326.0" y="361" width="8.0" height="2" fill="#cfd185"/><rect x="1334.0" y="361" width="9.0" height="2" fill="#b7b6b4"/><rect x="1344.2" y="361" width="5.4" height="2" fill="#b7b6b4"/><rect x="1350.8" y="361" width="4.7" height="2" fill="#b7b6b4"/><rect x="1331.0" y="364" width="10.3" height="2" fill="#b7b6b4"/><rect x="1341.3" y="364" width="9.6" height="2" fill="#e3c994"/><rect x="1335.9" y="367" width="7.9" height="2" fill="#b7b6b4"/><rect x="1343.8" y="367" width="10.1" height="2" fill="#a8d2c7"/><rect x="1331.0" y="370" width="2.1" height="2" fill="#b7b6b4"/><rect x="1331.0" y="373" width="38.9" height="2" fill="#deded1"/><rect x="1331.0" y="376" width="13.7" height="2" fill="#b7b6b4"/><rect x="1344.7" y="376" width="7.3" height="2" fill="#e3c994"/><rect x="1335.9" y="379" width="5.9" height="2" fill="#b7b6b4"/><rect x="1343.0" y="379" width="10.2" height="2" fill="#b7b6b4"/><rect x="1353.2" y="379" width="9.2" height="2" fill="#e3c994"/><rect x="1362.4" y="379" width="9.6" height="2" fill="#b7b6b4"/><rect x="1335.9" y="382" width="10.5" height="2" fill="#e3c994"/><rect x="1346.4" y="382" width="5.3" height="2" fill="#b7b6b4"/><rect x="1352.9" y="382" width="10.1" height="2" fill="#b7b6b4"/><rect x="1363.0" y="382" width="9.0" height="2" fill="#b2bbdf"/><rect x="1339.9" y="385" width="13.9" height="2" fill="#b3c890"/><rect x="1353.8" y="385" width="8.3" height="2" fill="#b1d2e6"/><rect x="1362.1" y="385" width="9.9" height="2" fill="#b7b6b4"/><rect x="1339.9" y="388" width="13.0" height="2" fill="#cfd185"/><rect x="1352.9" y="388" width="8.9" height="2" fill="#b7b6b4"/><rect x="1363.1" y="388" width="9.0" height="2" fill="#b7b6b4"/><rect x="1344.9" y="391" width="4.0" height="2" fill="#b7b6b4"/><rect x="1350.1" y="391" width="11.5" height="2" fill="#b7b6b4"/><rect x="1361.6" y="391" width="10.5" height="2" fill="#e3c994"/><rect x="1349.8" y="394" width="5.0" height="2" fill="#b7b6b4"/><rect x="1354.8" y="394" width="7.8" height="2" fill="#e3c994"/><rect x="1344.9" y="397" width="6.5" height="2" fill="#b7b6b4"/><rect x="1351.4" y="397" width="6.9" height="2" fill="#b2bbdf"/><rect x="1358.3" y="397" width="4.3" height="2" fill="#b7b6b4"/><rect x="1349.8" y="400" width="8.7" height="2" fill="#b7b6b4"/><rect x="1358.5" y="400" width="7.0" height="2" fill="#e3c994"/><rect x="1365.5" y="400" width="6.6" height="2" fill="#b7b6b4"/><rect x="1349.8" y="403" width="7.4" height="2" fill="#b7b6b4"/><rect x="1358.3" y="403" width="8.3" height="2" fill="#b7b6b4"/><rect x="1366.6" y="403" width="5.4" height="2" fill="#e3c994"/><rect x="1344.9" y="406" width="8.1" height="2" fill="#b7b6b4"/><rect x="1352.9" y="406" width="5.1" height="2" fill="#b2bbdf"/><rect x="1358.0" y="406" width="6.1" height="2" fill="#b7b6b4"/><rect x="1349.8" y="409" width="6.0" height="2" fill="#b7b6b4"/><rect x="1355.8" y="409" width="6.8" height="2" fill="#e3c994"/><rect x="1362.6" y="409" width="9.4" height="2" fill="#b7b6b4"/><rect x="1349.8" y="412" width="10.3" height="2" fill="#b7b6b4"/><rect x="1360.1" y="412" width="7.7" height="2" fill="#e3c994"/><rect x="1354.9" y="415" width="7.8" height="2" fill="#b7b6b4"/><rect x="1362.7" y="415" width="9.3" height="2" fill="#a8d2c7"/><rect x="1354.9" y="418" width="3.9" height="2" fill="#b7b6b4"/><rect x="1360.0" y="418" width="5.4" height="2" fill="#b7b6b4"/><rect x="1365.4" y="418" width="6.6" height="2" fill="#ebb0c3"/><rect x="1349.8" y="421" width="4.1" height="2" fill="#b7b6b4"/><rect x="1344.9" y="424" width="3.9" height="2" fill="#b7b6b4"/><rect x="1339.9" y="427" width="1.7" height="2" fill="#b7b6b4"/><rect x="1335.9" y="430" width="1.2" height="2" fill="#b7b6b4"/><rect x="1331.0" y="433" width="2.8" height="2" fill="#b7b6b4"/><rect x="1326.0" y="436" width="1.2" height="2" fill="#b7b6b4"/><rect x="1320.9" y="439" width="1.2" height="2" fill="#b7b6b4"/><rect x="1316.0" y="442" width="2.8" height="2" fill="#b7b6b4"/><rect x="1312.1" y="445" width="1.2" height="2" fill="#b7b6b4"/><rect x="1307.0" y="448" width="1.2" height="2" fill="#b7b6b4"/><rect x="1302.1" y="451" width="1.2" height="2" fill="#b7b6b4"/><rect x="1302.1" y="454" width="1.2" height="2" fill="#b7b6b4"/><rect x="1297.2" y="457" width="3.9" height="2" fill="#b7b6b4"/><rect x="1292.0" y="460" width="4.1" height="2" fill="#b7b6b4"/><rect x="1292.0" y="463" width="4.7" height="2" fill="#deded1"/><rect x="1296.7" y="463" width="6.0" height="2" fill="#cfd185"/><rect x="1292.0" y="469" width="25.7" height="2" fill="#deded1"/><rect x="1292.0" y="472" width="9.4" height="2" fill="#b2bbdf"/><rect x="1301.5" y="472" width="9.7" height="2" fill="#b7b6b4"/><rect x="1311.2" y="472" width="6.5" height="2" fill="#a8d2c7"/><rect x="1292.0" y="475" width="4.1" height="2" fill="#b7b6b4"/><rect x="1297.4" y="475" width="6.8" height="2" fill="#b7b6b4"/><rect x="1304.1" y="475" width="5.2" height="2" fill="#cfd185"/><rect x="1309.4" y="475" width="9.4" height="2" fill="#b7b6b4"/><rect x="1292.0" y="478" width="7.5" height="2" fill="#b2bbdf"/><rect x="1299.5" y="478" width="7.3" height="2" fill="#b7b6b4"/><rect x="1308.0" y="478" width="10.7" height="2" fill="#b7b6b4"/><rect x="1318.6" y="478" width="9.3" height="2" fill="#e3c994"/><rect x="1328.0" y="478" width="10.9" height="2" fill="#e3c994"/><rect x="1338.9" y="478" width="5.3" height="2" fill="#a8d2c7"/><rect x="1344.1" y="478" width="10.4" height="2" fill="#a8d2c7"/><rect x="1354.5" y="478" width="8.1" height="2" fill="#a8d2c7"/><rect x="1292.0" y="481" width="8.7" height="2" fill="#cfd185"/><rect x="1300.8" y="481" width="6.6" height="2" fill="#b7b6b4"/><rect x="1308.6" y="481" width="9.0" height="2" fill="#b7b6b4"/><rect x="1317.6" y="481" width="9.0" height="2" fill="#cfd185"/><rect x="1326.6" y="481" width="8.9" height="2" fill="#b7b6b4"/><rect x="1336.7" y="481" width="6.0" height="2" fill="#b7b6b4"/><rect x="1343.8" y="481" width="8.1" height="2" fill="#b7b6b4"/><rect x="1297.2" y="484" width="10.1" height="2" fill="#b3c890"/><rect x="1307.2" y="484" width="8.0" height="2" fill="#b1d2e6"/><rect x="1315.2" y="484" width="7.7" height="2" fill="#a8d2c7"/><rect x="1322.8" y="484" width="8.1" height="2" fill="#a8d2c7"/><rect x="1297.2" y="487" width="8.1" height="2" fill="#b7b6b4"/><rect x="1305.2" y="487" width="6.6" height="2" fill="#e3c994"/><rect x="1311.9" y="487" width="5.6" height="2" fill="#e3c994"/><rect x="1317.5" y="487" width="7.5" height="2" fill="#b7b6b4"/><rect x="1297.2" y="490" width="6.5" height="2" fill="#b7b6b4"/><rect x="1303.6" y="490" width="7.5" height="2" fill="#e3c994"/><rect x="1311.2" y="490" width="6.8" height="2" fill="#e3c994"/><rect x="1317.9" y="490" width="5.8" height="2" fill="#a8d2c7"/><rect x="1323.7" y="490" width="9.3" height="2" fill="#a8d2c7"/><rect x="1333.1" y="490" width="5.1" height="2" fill="#a8d2c7"/><rect x="1338.2" y="490" width="4.2" height="2" fill="#b7b6b4"/><rect x="1343.6" y="490" width="8.3" height="2" fill="#b7b6b4"/><rect x="1292.0" y="493" width="1.5" height="2" fill="#b7b6b4"/><rect x="1287.8" y="496" width="1.9" height="2" fill="#b7b6b4"/><rect x="1287.8" y="499" width="4.5" height="2" fill="#e3c994"/><rect x="1292.3" y="499" width="6.9" height="2" fill="#b2bbdf"/><rect x="1299.2" y="499" width="6.3" height="2" fill="#b2bbdf"/><rect x="1305.5" y="499" width="6.2" height="2" fill="#b7b6b4"/><rect x="1292.0" y="502" width="4.5" height="2" fill="#b3c890"/><rect x="1296.6" y="502" width="4.9" height="2" fill="#b3c890"/><rect x="1301.5" y="502" width="6.8" height="2" fill="#b1d2e6"/><rect x="1308.3" y="502" width="4.6" height="2" fill="#a8d2c7"/><rect x="1312.9" y="502" width="6.9" height="2" fill="#a8d2c7"/><rect x="1292.0" y="505" width="7.6" height="2" fill="#b2bbdf"/><rect x="1299.7" y="505" width="2.8" height="2" fill="#b7b6b4"/><rect x="1303.7" y="505" width="6.4" height="2" fill="#b7b6b4"/><rect x="1310.1" y="505" width="4.8" height="2" fill="#e3c994"/><rect x="1315.0" y="505" width="7.9" height="2" fill="#e3c994"/><rect x="1322.9" y="505" width="4.1" height="2" fill="#a8d2c7"/><rect x="1327.0" y="505" width="5.6" height="2" fill="#a8d2c7"/><rect x="1332.6" y="505" width="5.9" height="2" fill="#cfd185"/><rect x="1338.5" y="505" width="6.4" height="2" fill="#a8d2c7"/><rect x="1292.0" y="508" width="3.4" height="2" fill="#b1d2e6"/><rect x="1295.4" y="508" width="7.8" height="2" fill="#e3c994"/><rect x="1303.3" y="508" width="6.9" height="2" fill="#e3c994"/><rect x="1310.1" y="508" width="3.7" height="2" fill="#b7b6b4"/><rect x="1292.0" y="514" width="7.1" height="2" fill="#b7b6b4"/><rect x="1299.2" y="514" width="6.1" height="2" fill="#e3c994"/><rect x="1305.3" y="514" width="4.7" height="2" fill="#e3c994"/><rect x="1310.0" y="514" width="4.9" height="2" fill="#e3c994"/><rect x="1302.1" y="517" width="2.6" height="2" fill="#b7b6b4"/><rect x="1305.9" y="517" width="2.4" height="2" fill="#b7b6b4"/><rect x="1308.3" y="517" width="4.5" height="2" fill="#ebb0c3"/><rect x="1302.1" y="520" width="6.6" height="2" fill="#b7b6b4"/><rect x="1308.7" y="520" width="4.1" height="2" fill="#b1d2e6"/><rect x="1312.8" y="520" width="4.5" height="2" fill="#e3c994"/><rect x="1317.3" y="520" width="5.5" height="2" fill="#a8d2c7"/><rect x="1322.8" y="520" width="5.9" height="2" fill="#a8d2c7"/><rect x="1328.7" y="520" width="7.1" height="2" fill="#a8d2c7"/><rect x="1297.2" y="523" width="3.9" height="2" fill="#b7b6b4"/><rect x="1297.2" y="526" width="5.9" height="2" fill="#b7b6b4"/><rect x="1303.0" y="526" width="7.0" height="2" fill="#e3c994"/><rect x="1310.0" y="526" width="3.6" height="2" fill="#e3c994"/><rect x="1313.6" y="526" width="6.2" height="2" fill="#e3c994"/><rect x="1302.1" y="529" width="2.6" height="2" fill="#b7b6b4"/><rect x="1305.9" y="529" width="3.2" height="2" fill="#b7b6b4"/><rect x="1309.1" y="529" width="3.7" height="2" fill="#ebb0c3"/><rect x="1302.1" y="532" width="5.1" height="2" fill="#b7b6b4"/><rect x="1307.1" y="532" width="7.1" height="2" fill="#b1d2e6"/><rect x="1314.2" y="532" width="6.0" height="2" fill="#e3c994"/><rect x="1320.2" y="532" width="4.4" height="2" fill="#a8d2c7"/><rect x="1324.6" y="532" width="4.8" height="2" fill="#a8d2c7"/><rect x="1329.4" y="532" width="8.6" height="2" fill="#a8d2c7"/><rect x="1297.2" y="535" width="3.9" height="2" fill="#b7b6b4"/><rect x="1297.2" y="538" width="6.5" height="2" fill="#b7b6b4"/><rect x="1303.7" y="538" width="6.2" height="2" fill="#e3c994"/><rect x="1309.9" y="538" width="3.9" height="2" fill="#e3c994"/><rect x="1313.8" y="538" width="6.1" height="2" fill="#e3c994"/><rect x="1302.1" y="541" width="2.5" height="2" fill="#b7b6b4"/><rect x="1305.8" y="541" width="4.0" height="2" fill="#b7b6b4"/><rect x="1309.8" y="541" width="3.0" height="2" fill="#ebb0c3"/><rect x="1302.1" y="544" width="7.7" height="2" fill="#b7b6b4"/><rect x="1309.8" y="544" width="3.9" height="2" fill="#b1d2e6"/><rect x="1313.7" y="544" width="5.0" height="2" fill="#e3c994"/><rect x="1318.6" y="544" width="5.1" height="2" fill="#a8d2c7"/><rect x="1323.8" y="544" width="5.0" height="2" fill="#a8d2c7"/><rect x="1328.7" y="544" width="5.0" height="2" fill="#a8d2c7"/><rect x="1297.2" y="547" width="3.9" height="2" fill="#b7b6b4"/><rect x="1297.2" y="550" width="26.7" height="2" fill="#deded1"/><rect x="1297.2" y="553" width="18.8" height="2" fill="#deded1"/><rect x="1297.2" y="556" width="42.8" height="2" fill="#deded1"/><rect x="1297.2" y="559" width="6.6" height="2" fill="#deded1"/><rect x="1297.2" y="562" width="5.1" height="2" fill="#b7b6b4"/><rect x="1302.3" y="562" width="5.8" height="2" fill="#e3c994"/><rect x="1308.1" y="562" width="6.9" height="2" fill="#e3c994"/><rect x="1315.0" y="562" width="4.9" height="2" fill="#e3c994"/><rect x="1302.1" y="565" width="2.8" height="2" fill="#b7b6b4"/><rect x="1306.1" y="565" width="2.6" height="2" fill="#b7b6b4"/><rect x="1308.7" y="565" width="4.0" height="2" fill="#ebb0c3"/><rect x="1302.1" y="568" width="5.8" height="2" fill="#b7b6b4"/><rect x="1307.9" y="568" width="7.5" height="2" fill="#b1d2e6"/><rect x="1315.4" y="568" width="4.0" height="2" fill="#e3c994"/><rect x="1319.4" y="568" width="5.3" height="2" fill="#a8d2c7"/><rect x="1324.7" y="568" width="4.5" height="2" fill="#a8d2c7"/><rect x="1329.2" y="568" width="7.8" height="2" fill="#a8d2c7"/><rect x="1297.2" y="571" width="3.9" height="2" fill="#b7b6b4"/><rect x="1297.2" y="574" width="5.6" height="2" fill="#b7b6b4"/><rect x="1302.7" y="574" width="4.3" height="2" fill="#e3c994"/><rect x="1307.0" y="574" width="7.9" height="2" fill="#e3c994"/><rect x="1314.9" y="574" width="5.0" height="2" fill="#e3c994"/><rect x="1302.1" y="577" width="1.2" height="2" fill="#b7b6b4"/><rect x="1304.5" y="577" width="5.3" height="2" fill="#b7b6b4"/><rect x="1309.8" y="577" width="2.9" height="2" fill="#ebb0c3"/><rect x="1302.1" y="580" width="8.2" height="2" fill="#b7b6b4"/><rect x="1310.3" y="580" width="6.0" height="2" fill="#b1d2e6"/><rect x="1316.3" y="580" width="4.9" height="2" fill="#e3c994"/><rect x="1321.3" y="580" width="4.2" height="2" fill="#a8d2c7"/><rect x="1325.5" y="580" width="7.8" height="2" fill="#a8d2c7"/><rect x="1333.3" y="580" width="4.7" height="2" fill="#a8d2c7"/><rect x="1297.2" y="583" width="3.9" height="2" fill="#b7b6b4"/><rect x="1287.8" y="586" width="1.9" height="2" fill="#b7b6b4"/><rect x="1287.8" y="589" width="5.5" height="2" fill="#e3c994"/><rect x="1293.3" y="589" width="5.6" height="2" fill="#b2bbdf"/><rect x="1298.9" y="589" width="5.0" height="2" fill="#b2bbdf"/><rect x="1303.9" y="589" width="7.8" height="2" fill="#b7b6b4"/><rect x="1292.0" y="592" width="5.9" height="2" fill="#b3c890"/><rect x="1297.9" y="592" width="3.5" height="2" fill="#b3c890"/><rect x="1301.5" y="592" width="5.7" height="2" fill="#b1d2e6"/><rect x="1307.2" y="592" width="6.5" height="2" fill="#a8d2c7"/><rect x="1313.8" y="592" width="6.1" height="2" fill="#a8d2c7"/><rect x="1287.8" y="595" width="1.9" height="2" fill="#b7b6b4"/><rect x="1287.8" y="601" width="10.1" height="2" fill="#b7b6b4"/><rect x="1292.0" y="604" width="5.2" height="2" fill="#e3c994"/><rect x="1297.2" y="604" width="5.9" height="2" fill="#e3c994"/><rect x="1303.1" y="604" width="4.9" height="2" fill="#b7b6b4"/><rect x="1297.2" y="607" width="4.8" height="2" fill="#b3c890"/><rect x="1302.0" y="607" width="4.0" height="2" fill="#b3c890"/><rect x="1306.0" y="607" width="6.0" height="2" fill="#b1d2e6"/><rect x="1312.0" y="607" width="4.0" height="2" fill="#b7b6b4"/><rect x="1297.2" y="610" width="5.6" height="2" fill="#b1d2e6"/><rect x="1302.8" y="610" width="4.3" height="2" fill="#b7b6b4"/><rect x="1308.2" y="610" width="7.2" height="2" fill="#b7b6b4"/><rect x="1315.4" y="610" width="5.5" height="2" fill="#e3c994"/><rect x="1320.9" y="610" width="5.8" height="2" fill="#e3c994"/><rect x="1326.8" y="610" width="3.5" height="2" fill="#a8d2c7"/><rect x="1330.3" y="610" width="5.3" height="2" fill="#a8d2c7"/><rect x="1335.6" y="610" width="3.4" height="2" fill="#a8d2c7"/><rect x="1339.0" y="610" width="4.8" height="2" fill="#b7b6b4"/><rect x="1292.0" y="613" width="1.5" height="2" fill="#b7b6b4"/><rect x="1287.8" y="616" width="1.2" height="2" fill="#b7b6b4"/><rect x="1282.8" y="619" width="1.2" height="2" fill="#b7b6b4"/><rect x="1278.1" y="622" width="10.7" height="2" fill="#abc0dd"/><rect x="1278.1" y="625" width="7.5" height="2" fill="#abc0dd"/><rect x="1282.8" y="628" width="19.9" height="2" fill="#deded1"/><rect x="1282.8" y="631" width="6.4" height="2" fill="#cfd185"/><rect x="1289.3" y="631" width="8.3" height="2" fill="#b1d2e6"/><rect x="1297.6" y="631" width="7.0" height="2" fill="#a8d2c7"/><rect x="1304.5" y="631" width="7.6" height="2" fill="#a8d2c7"/><rect x="1312.1" y="631" width="8.5" height="2" fill="#a8d2c7"/><rect x="1282.8" y="634" width="9.2" height="2" fill="#cfd185"/><rect x="1292.1" y="634" width="7.4" height="2" fill="#b1d2e6"/><rect x="1299.5" y="634" width="4.6" height="2" fill="#a8d2c7"/><rect x="1304.1" y="634" width="8.2" height="2" fill="#a8d2c7"/><rect x="1312.3" y="634" width="7.6" height="2" fill="#a8d2c7"/><rect x="1319.8" y="634" width="5.1" height="2" fill="#b7b6b4"/><rect x="1282.8" y="637" width="8.2" height="2" fill="#cfd185"/><rect x="1291.1" y="637" width="4.4" height="2" fill="#b1d2e6"/><rect x="1295.4" y="637" width="8.8" height="2" fill="#a8d2c7"/><rect x="1304.3" y="637" width="9.1" height="2" fill="#a8d2c7"/><rect x="1313.3" y="637" width="4.7" height="2" fill="#a8d2c7"/><rect x="1318.1" y="637" width="7.4" height="2" fill="#a8d2c7"/><rect x="1325.5" y="637" width="6.6" height="2" fill="#b7b6b4"/><rect x="1282.8" y="640" width="6.0" height="2" fill="#abc0dd"/><rect x="1287.8" y="643" width="32.1" height="2" fill="#deded1"/><rect x="1282.8" y="646" width="1.2" height="2" fill="#b7b6b4"/><rect x="1282.8" y="652" width="15.0" height="2" fill="#e5ae99"/><rect x="1287.8" y="655" width="8.5" height="2" fill="#b3c890"/><rect x="1296.2" y="655" width="9.6" height="2" fill="#b1d2e6"/><rect x="1305.8" y="655" width="5.1" height="2" fill="#b7b6b4"/><rect x="1312.1" y="655" width="6.5" height="2" fill="#b7b6b4"/><rect x="1319.8" y="655" width="6.9" height="2" fill="#b7b6b4"/><rect x="1287.8" y="658" width="8.3" height="2" fill="#b3c890"/><rect x="1296.1" y="658" width="5.6" height="2" fill="#ebb0c3"/><rect x="1287.8" y="661" width="12.3" height="2" fill="#b3c890"/><rect x="1300.1" y="661" width="11.6" height="2" fill="#b3c890"/><rect x="1311.7" y="661" width="7.1" height="2" fill="#e5ae99"/><rect x="1282.8" y="664" width="1.2" height="2" fill="#b7b6b4"/><rect x="1282.8" y="667" width="12.8" height="2" fill="#e5ae99"/><rect x="1287.8" y="670" width="9.3" height="2" fill="#b3c890"/><rect x="1297.0" y="670" width="9.2" height="2" fill="#b1d2e6"/><rect x="1306.2" y="670" width="5.7" height="2" fill="#b7b6b4"/><rect x="1313.1" y="670" width="6.3" height="2" fill="#b7b6b4"/><rect x="1320.6" y="670" width="6.1" height="2" fill="#b7b6b4"/><rect x="1287.8" y="673" width="7.5" height="2" fill="#b3c890"/><rect x="1295.2" y="673" width="6.4" height="2" fill="#ebb0c3"/><rect x="1287.8" y="676" width="12.2" height="2" fill="#b3c890"/><rect x="1300.0" y="676" width="6.8" height="2" fill="#b7b6b4"/><rect x="1287.8" y="679" width="9.3" height="2" fill="#b3c890"/><rect x="1297.1" y="679" width="11.6" height="2" fill="#b3c890"/><rect x="1308.6" y="679" width="10.1" height="2" fill="#e5ae99"/><rect x="1287.8" y="682" width="4.0" height="2" fill="#b3c890"/><rect x="1291.8" y="682" width="3.9" height="2" fill="#ebb0c3"/><rect x="1287.8" y="685" width="4.8" height="2" fill="#b3c890"/><rect x="1292.5" y="685" width="6.8" height="2" fill="#b3c890"/><rect x="1299.3" y="685" width="3.4" height="2" fill="#ebb0c3"/><rect x="1282.8" y="688" width="1.2" height="2" fill="#b7b6b4"/><rect x="1282.8" y="694" width="6.0" height="2" fill="#abc0dd"/><rect x="1287.8" y="697" width="16.1" height="2" fill="#b3c890"/><rect x="1303.8" y="697" width="13.8" height="2" fill="#b7b6b4"/><rect x="1317.6" y="697" width="9.1" height="2" fill="#cfd185"/><rect x="1282.8" y="700" width="1.2" height="2" fill="#b7b6b4"/><rect x="1282.8" y="703" width="10.7" height="2" fill="#abc0dd"/><rect x="1287.8" y="706" width="11.4" height="2" fill="#b3c890"/><rect x="1299.1" y="706" width="15.8" height="2" fill="#b7b6b4"/><rect x="1287.8" y="709" width="5.9" height="2" fill="#b3c890"/><rect x="1293.6" y="709" width="5.8" height="2" fill="#b3c890"/><rect x="1299.4" y="709" width="8.7" height="2" fill="#ebb0c3"/><rect x="1287.8" y="712" width="7.2" height="2" fill="#b3c890"/><rect x="1295.0" y="712" width="5.9" height="2" fill="#b3c890"/><rect x="1300.9" y="712" width="7.2" height="2" fill="#ebb0c3"/><rect x="1282.8" y="715" width="1.2" height="2" fill="#b7b6b4"/><rect x="1282.8" y="718" width="21.0" height="2" fill="#e5ae99"/><rect x="1287.8" y="721" width="7.6" height="2" fill="#b3c890"/><rect x="1295.3" y="721" width="6.3" height="2" fill="#ebb0c3"/><rect x="1282.8" y="724" width="1.2" height="2" fill="#b7b6b4"/><rect x="1282.8" y="727" width="12.8" height="2" fill="#e5ae99"/><rect x="1287.8" y="730" width="4.9" height="2" fill="#b3c890"/><rect x="1292.7" y="730" width="7.7" height="2" fill="#ebb0c3"/><rect x="1300.4" y="730" width="8.8" height="2" fill="#cfd185"/><rect x="1309.2" y="730" width="8.5" height="2" fill="#cfd185"/><rect x="1282.8" y="733" width="1.2" height="2" fill="#b7b6b4"/><rect x="1282.8" y="736" width="18.8" height="2" fill="#e5ae99"/><rect x="1287.8" y="739" width="6.6" height="2" fill="#b3c890"/><rect x="1294.3" y="739" width="6.1" height="2" fill="#b7b6b4"/><rect x="1300.4" y="739" width="5.1" height="2" fill="#cfd185"/><rect x="1305.5" y="739" width="7.3" height="2" fill="#cfd185"/><rect x="1282.8" y="742" width="1.2" height="2" fill="#b7b6b4"/><rect x="1278.1" y="745" width="9.6" height="2" fill="#abc0dd"/></svg>
<div class="abs" style="left:1372px;top:120px;width:8px;height:70px;background:#f1e6c3"></div>
<div class="abs" style="left:1278px;top:747px;width:94px;height:3px;background:#ebe4c6"></div>
<!-- editor bottom -->
<div class="abs" style="left:333px;top:783px;width:944px;height:9px;background:#fffae8"></div>
<div class="abs" style="left:333px;top:784px;width:668px;height:8px;background:#f8f2dd"></div>
<div class="abs" style="left:0px;top:792px;width:1380px;height:1px;background:#dcd2aa"></div>
<div class="abs" style="left:1380px;top:70px;width:1px;height:923px;background:#dcd2aa"></div>

<!-- ======= right: web browser panel ======= -->
<div class="abs" style="left:1381px;top:70px;width:539px;height:923px;background:#fafafa"></div>
<div class="abs" style="left:1381px;top:70px;width:539px;height:110px;background:#fffdf6;border-bottom:1px solid #dcd2aa"></div>
<div class="abs" style="left:1507px;top:70px;width:413px;height:32px;background:#fffae8;border-left:1px solid #dcd2aa;border-bottom:1px solid #dcd2aa"></div>
<div class="abs" style="left:1392px;top:75px;font-size:16px;letter-spacing:0.1px;line-height:22px;color:#1f2326;white-space:nowrap">Web浏览器</div>
<svg class="abs" style="left:1483px;top:81px" width="11" height="11" viewBox="0 0 11 11"><path d="M1.5 1.5 L9.5 9.5 M9.5 1.5 L1.5 9.5" stroke="#555" stroke-width="1"/></svg>
<div class="abs" style="left:1388px;top:108px;width:526px;height:30px;border:1px solid #dcd2aa;background:#fffefb;font-size:17.4px;line-height:28px;padding-left:8px;color:#1f2326;white-space:nowrap">http://localhost:8000/h5/#/</div>
<div class="abs" style="left:1387px;top:143px;width:143px;height:30px;border:1px solid #3fa761;background:#fffefb;font-size:16.4px;line-height:28px;padding-left:6px;color:#1f2326;white-space:nowrap">iPhone 6/7/8</div>
<svg class="abs" style="left:1517px;top:155px" width="8" height="5" viewBox="0 0 8 5"><path d="M0.5 0.5 H7.5 L4 4.5 Z" fill="#3fa761"/></svg>
<svg class="abs" style="left:1540px;top:148px" width="230" height="18" viewBox="0 0 230 18">
 <g fill="none" stroke="#3fa761" stroke-width="1.2">
  <path d="M5 3.5 H14.5 V14.5 H3.5 V8 M2 2 L9 9 M2 6 V2 H6"/>
  <circle cx="38.5" cy="9" r="2.300"/><path d="M36.63 2.88 L40.37 2.88 L40.29 4.33 L41.65 5.11 L42.86 4.32 L44.74 7.56 L43.44 8.22 L43.44 9.78 L44.74 10.44 L42.86 13.68 L41.65 12.89 L40.29 13.67 L40.37 15.12 L36.63 15.12 L36.71 13.67 L35.35 12.89 L34.14 13.68 L32.26 10.44 L33.56 9.78 L33.56 8.22 L32.26 7.56 L34.14 4.32 L35.35 5.11 L36.71 4.33 Z" stroke-linejoin="round"/>
  <rect x="62.500" y="3.500" width="13" height="11"/><path d="M65 6.500 L67.500 9 L65 11.500 M69.500 11.800 H72.500"/>
 </g>
 <g fill="none" stroke="#9a9a9a" stroke-width="1.600"><path d="M105 9 H92.5 M97 4.5 L92.5 9 L97 13.5"/><path d="M121 9 H133.5 M129 4.5 L133.5 9 L129 13.5"/></g>
 <g fill="none" stroke="#3fa761" stroke-width="1.2">
  <path d="M163.5 6 A6 6 0 1 0 164.5 9.5 M164.5 2.5 V6.3 H160.7"/>
  <rect x="184" y="8.5" width="9" height="7"/><path d="M185.5 8.5 V5.5 A3 3 0 0 1 191 4.5"/>
  <rect x="213.500" y="3.500" width="4" height="4"/><rect x="220.500" y="3.500" width="4" height="4"/><rect x="213.500" y="10.500" width="4" height="4"/><path d="M220 10.800 h2 M224.300 10.300 v2 M220 14.300 h1.500 M223 14.500 h1.800 v-1.200"/>
 </g>
</svg>

<!-- phone -->
<div id="phone" class="abs" style="left:1463px;top:253px;width:375px;height:667px;background:#fff;box-shadow:0 0 12px rgba(0,0,0,.28);overflow:hidden;font-family:'Liberation Sans','Noto Sans CJK SC',sans-serif">
 <!-- header -->
 <div class="abs" style="left:0;top:0;width:375px;height:52px;background:#fff;border-bottom:1px solid #ebebeb"></div>
 <svg class="abs" style="left:141px;top:10px" width="35" height="29" viewBox="0 0 35 29"><g fill="none" stroke="#f7931a" stroke-linecap="round" stroke-linejoin="round"><path d="M31.500 5.800 C26 1.800 10 1 5.500 5.500 C2 9.500 7 12.500 13.500 13.800 C21 15.300 27.500 18 25 22" stroke-width="5.400"/><path d="M15.500 8 C11 10.500 10.500 18.500 15.500 22.500" stroke-width="5"/><path d="M2.500 23 C9 26.800 27 26.800 33 23.500" stroke-width="4.600"/></g><path d="M14.500 5.800 C10.500 7 8.500 9.500 8.800 11.500" fill="none" stroke="#fff" stroke-width="1.100" stroke-linecap="round"/></svg>
 <div class="abs" style="left:180px;top:11px;font-size:17.2px;line-height:28px;font-weight:bold;color:#f7931a;letter-spacing:-0.2px;-webkit-text-stroke:0.55px #f7931a;font-family:'Liberation Sans','Noto Sans CJK SC',sans-serif">SCBFF</div>
 <!-- banner 1 -->
 <div class="abs" style="left:0;top:55px;width:294px;height:96px;border-radius:0 6px 6px 0;overflow:hidden;background:#141c3a">
  <svg width="294" height="96" viewBox="0 0 294 96" style="position:absolute;left:0;top:0">
   <defs>
    <linearGradient id="bg1" x1="0" y1="0" x2="1" y2="1"><stop offset="0" stop-color="#070a1c"/><stop offset=".35" stop-color="#3a5486"/><stop offset=".6" stop-color="#2a3a68"/><stop offset="1" stop-color="#0e1030"/></linearGradient>
    <radialGradient id="coin" cx=".45" cy=".4" r=".7"><stop offset="0" stop-color="#dcb092"/><stop offset=".5" stop-color="#b27a58"/><stop offset="1" stop-color="#6a4029"/></radialGradient>
   </defs>
   <rect width="294" height="96" fill="#0b0d25"/>
   <filter id="bl" x="-20%" y="-20%" width="140%" height="140%"><feGaussianBlur stdDeviation="5"/></filter>
   <filter id="bl2" x="-20%" y="-20%" width="140%" height="140%"><feGaussianBlur stdDeviation="1"/></filter>
   <g filter="url(#bl)"><path d="M85 -8 L200 -8 L222 24 L200 50 L150 30 Z" fill="#44608f"/><path d="M232 100 L298 44 L298 70 L262 100 Z" fill="#34427c"/><path d="M190 50 L235 30 L250 70 L215 85 Z" fill="#1c2a55"/></g>
   <g stroke-linecap="round" fill="none" filter="url(#bl2)">
    <path d="M0 22 L40 34" stroke="#e83aa0" stroke-width="3"/><path d="M0 34 L30 40" stroke="#39d06a" stroke-width="3"/>
    <path d="M196 4 L260 14" stroke="#39d06a" stroke-width="3" opacity=".8"/><path d="M215 18 L285 28" stroke="#3fd873" stroke-width="5" opacity=".85"/><path d="M240 32 L294 38" stroke="#e83aa0" stroke-width="3"/>
    <path d="M205 6 L250 40 L294 44" stroke="#c44fe0" stroke-width="3" opacity=".85"/>
    <path d="M210 55 L294 36" stroke="#e64ab0" stroke-width="7" opacity=".9"/>
    <path d="M150 60 L230 52 L294 40" stroke="#e8e8ff" stroke-width="1.2" opacity=".8"/>
    <path d="M205 10 C215 30 208 44 222 52 C238 60 240 78 294 92" stroke="#d6c23a" stroke-width="2"/>
    <path d="M160 72 L200 66" stroke="#e83aa0" stroke-width="3"/><path d="M170 80 L215 74" stroke="#39d06a" stroke-width="3"/><path d="M200 84 L240 78" stroke="#e83aa0" stroke-width="3"/>
    <path d="M120 96 L230 50" stroke="#cfd4ff" stroke-width="1" opacity=".7"/>
    <path d="M130 72 L140 96" stroke="#b050d8" stroke-width="1.5"/>
    <path d="M0 60 L40 96" stroke="#e83aa0" stroke-width="1.5" opacity=".7"/><path d="M30 70 C36 80 34 88 36 96" stroke="#cfc040" stroke-width="2" opacity=".7"/>
   </g>
   <ellipse cx="101" cy="57" rx="77" ry="29" fill="#1a0e0a" opacity=".7" filter="url(#bl2)"/><ellipse cx="100" cy="54" rx="78.5" ry="29" fill="#8a5a40"/>
   <ellipse cx="99.5" cy="48" rx="78.5" ry="28" fill="url(#coin)"/>
   <ellipse cx="99.5" cy="48" rx="70" ry="24" fill="none" stroke="#8b5a3f" stroke-width="1.5" opacity=".8"/>
   <ellipse cx="99.5" cy="48" rx="60" ry="20" fill="none" stroke="#e2b89b" stroke-width="1" opacity=".6"/>
   <text x="86" y="66" font-family="Liberation Serif,serif" font-weight="bold" font-size="44" fill="#5b3a22" transform="rotate(-14 100 52) scale(1.25 .8) translate(-20 13)">B</text>
  </svg>
 </div>
 <!-- banner 2 -->
 <div class="abs" style="left:310px;top:49px;width:80px;height:113px;border-radius:7px 0 0 7px;overflow:hidden;background:#0b0e22">
  <svg width="80" height="113" viewBox="0 0 80 113" style="position:absolute;left:0;top:0">
   <rect width="80" height="113" fill="#0a0d20"/>
   <g stroke-linecap="round" fill="none"><path d="M2 18 L40 30" stroke="#e83aa0" stroke-width="3"/><path d="M2 30 L30 38" stroke="#39d06a" stroke-width="3"/><path d="M20 8 C40 14 50 20 65 30" stroke="#cfc040" stroke-width="1.5"/><path d="M5 40 L50 28" stroke="#c44fe0" stroke-width="1.5"/><path d="M0 76 L20 112" stroke="#e83aa0" stroke-width="1.5"/><path d="M35 80 C40 95 38 104 40 113" stroke="#cfc040" stroke-width="2" opacity=".7"/></g>
   <ellipse cx="92" cy="66" rx="62" ry="38" fill="#3a2418"/>
   <ellipse cx="92" cy="60" rx="62" ry="38" fill="#c08a68"/>
   <ellipse cx="92" cy="60" rx="54" ry="32" fill="none" stroke="#8b5a3f" stroke-width="1.5"/>
   <ellipse cx="92" cy="60" rx="46" ry="26" fill="none" stroke="#e2b89b" stroke-width="1" opacity=".6"/>
  </svg>
 </div>
 <!-- indicator -->
 <div class="abs" style="left:172px;top:148px;width:7px;height:7px;border-radius:4px;background:#ececec"></div>
 <div class="abs" style="left:184px;top:148px;width:20px;height:7px;border-radius:4px;background:#fff;border:1px solid #222"></div>
 <!-- notice -->
 <div class="abs" style="left:19px;top:175px;width:337px;height:39px;border-radius:20px;background:#f2f2f2"></div>
 <svg class="abs" style="left:29px;top:187px" width="15" height="16" viewBox="0 0 15 16"><path d="M0.5 5.5 H4 L8.5 1.5 V14.5 L4 10.5 H0.5 Z" fill="#c3c9d1"/><path d="M10.5 5 Q12 8 10.5 11 M12.3 3 Q15 8 12.3 13" fill="none" stroke="#d3d8de" stroke-width="1.2"/></svg>
 <div class="abs" style="left:53px;top:182px;font-size:12px;line-height:16px;color:#333;white-space:nowrap">关于移除部分交易对的公告</div>
 <!-- tickers -->
 <div class="abs" style="left:0;top:225px;width:375px;height:100px;background:#f2f2f2"></div>
 <div class="tk" style="left:6px"><div class="t1"><b>XRP</b>/USDT</div><div class="t2" style="color:#18b47f">0.83227</div><div class="t3" style="color:#18b47f">+1.20%</div></div>
 <div class="tk" style="left:131px"><div class="t1"><b>HT</b>/USDT</div><div class="t2" style="color:#18b47f">10.00090</div><div class="t3" style="color:#18b47f">+0.02%</div></div>
 <div class="tk" style="left:256px"><div class="t1"><b>SHIB</b>/USDT</div><div class="t2" style="color:#e8605a">0.00003</div><div class="t3" style="color:#e8605a">-0.14%</div></div>
 <!-- services -->
 <svg class="abs" style="left:80px;top:344px" width="28" height="32" viewBox="0 0 28 32"><defs><linearGradient id="cs" x1="0" y1="0" x2="0" y2="1"><stop offset="0" stop-color="#4aa8f0"/><stop offset="1" stop-color="#3fb6f2"/></linearGradient></defs><circle cx="14" cy="3.8" r="3.4" fill="#4aa8f0"/><path d="M14 4 C4 4 1 12 1.5 20 C2 27 8 31 14 31 C20 31 26 27 26.500 20 C27 12 24 4 14 4 Z" fill="url(#cs)"/><path d="M4.500 19 C5 15 10 16.500 14.500 12 C17 15.500 22.500 15 23.500 19 C23.500 24 19 29 14 29 C9 29 4.500 24 4.500 19 Z" fill="#fff"/><path d="M22.500 21 C21 25 18 26.500 15 26.800" fill="none" stroke="#4aa8f0" stroke-width="1.2"/><circle cx="14.500" cy="26.800" r="1.300" fill="#4aa8f0"/></svg>
 <div class="abs" style="left:54px;top:381px;width:80px;text-align:center;font-size:12px;line-height:16px;color:#222">在线客服</div>
 <svg class="abs" style="left:263px;top:341px" width="38" height="34" viewBox="0 0 38 34"><path d="M3 1 H26 A2.5 2.5 0 0 1 28.500 3.500 V19 A2.500 2.500 0 0 1 26 21.500 H10 L8 24.500 L6.500 21.500 H3 A2.500 2.500 0 0 1 0.500 19 V3.500 A2.500 2.500 0 0 1 3 1 Z" fill="#5bbcf0"/><text x="3.500" y="15" font-family="Liberation Sans,sans-serif" font-weight="bold" font-size="11" fill="#fff">C</text><path d="M16 8.500 H35 A2.500 2.500 0 0 1 37.500 11 V27 A2.500 2.500 0 0 1 35 29.500 H24.500 L22.500 33 L20.500 29.500 H16 A2.500 2.500 0 0 1 13.500 27 V11 A2.500 2.500 0 0 1 16 8.500 Z" fill="#2d8fe8"/><text x="17.500" y="23.500" font-family="Liberation Sans,sans-serif" font-weight="bold" font-size="10.500" fill="#fff">EN</text></svg>
 <div class="abs" style="left:241px;top:383px;width:80px;text-align:center;font-size:12px;line-height:16px;color:#222">语言切换</div>
 <!-- quick area -->
 <div class="abs" style="left:0;top:415px;width:375px;height:144px;background:#f6f6fb"></div>
 <div class="abs" style="left:10px;top:422px;width:213px;height:132px;border-radius:6px;background:#fff"></div>
 <div class="abs" style="left:228px;top:420px;width:137px;height:65px;border-radius:5px;background:#fff"></div>
 <div class="abs" style="left:228px;top:490px;width:137px;height:65px;border-radius:5px;background:#fff"></div>
 <div class="abs" style="left:20px;top:469px;font-size:16px;line-height:22px;font-weight:bold;color:#1a1a1a;white-space:nowrap">快捷买币</div>
 <div class="abs" style="left:20px;top:493px;font-size:12px;line-height:16px;color:#8f94a8;white-space:nowrap">支持BTC、USDT等</div>
 <svg class="abs" style="left:158px;top:466px" width="54" height="44" viewBox="0 0 54 44"><defs><linearGradient id="rb" x1="0" y1="0" x2="0" y2="1"><stop offset="0" stop-color="#f58a5e"/><stop offset="1" stop-color="#ee4a48"/></linearGradient></defs><circle cx="27" cy="23" r="19" fill="url(#rb)"/><path d="M16 11 L37 4 L33 14 L22 18 Z" fill="#fde6ea" stroke="#f7b8c4" stroke-width=".6"/><path d="M12 22 L41 18 L43 24 L13 30 Z" fill="#f9c6d2"/><path d="M13 30 L43 24 V27 L14 33 Z" fill="#f3a3b8"/><path d="M22 33 C27 37 30 39 31 42 M30 31 C32 35 34 37 37 38" stroke="#fde6ea" stroke-width="2.5" fill="none"/><path d="M3 23 l1.200-2.500 1.200 2.500 2.500 1.200 -2.500 1.200 -1.200 2.500 -1.200-2.500 -2.500-1.200z" fill="#f7a93b"/><path d="M49 14 l1-2 1 2 2 1 -2 1 -1 2 -1-2 -2-1z" fill="#f47a6a"/><circle cx="46" cy="6" r="1" fill="#f7a93b"/></svg>
 <svg class="abs" style="left:238px;top:438px" width="30" height="30" viewBox="0 0 30 30"><circle cx="14" cy="16" r="13" fill="#e3ebfb"/><circle cx="14" cy="16" r="7.500" fill="#f3f6fe" stroke="#7d8fe0" stroke-width="1.500"/><path d="M14 7 V4.500 M11.500 4 H16.500" stroke="#7d8fe0" stroke-width="1.500"/><path d="M13 12 C17 13 17 17 15 20 M12 22 L18 22.500" stroke="#e8b93a" stroke-width="1.600" fill="none"/><path d="M21 6 L25 2 M23 9 L26 7.500" stroke="#f0c64a" stroke-width="1.300"/></svg>
 <div class="abs" style="left:278px;top:446px;font-size:12px;line-height:16px;color:#1a1a1a;white-space:nowrap">期货交易</div>
 <svg class="abs" style="left:236px;top:510px" width="32" height="26" viewBox="0 0 32 26"><circle cx="16" cy="13" r="11.500" fill="#fbd65a"/><circle cx="16" cy="12" r="10" fill="#fde27e"/><rect x="6" y="7.500" width="20" height="11.500" rx="2" fill="#fff7dc" stroke="#f3b63a" stroke-width="1"/><rect x="7.500" y="13.500" width="17" height="4" fill="#f4a83a"/><circle cx="2" cy="6" r=".8" fill="#f9a" /><circle cx="30" cy="13" r=".8" fill="#f9a"/></svg>
 <div class="abs" style="left:278px;top:516px;font-size:12px;line-height:16px;color:#1a1a1a;white-space:nowrap">帮助中心</div>
 <!-- bottom banner -->
 <div class="abs" style="left:10px;top:570px;width:355px;height:80px;border-radius:9px;overflow:hidden;background:#071024">
  <svg width="355" height="80" viewBox="0 0 355 80" style="position:absolute;left:0;top:0">
   <defs><linearGradient id="bb" x1="0" y1="0" x2="1" y2="0"><stop offset="0" stop-color="#0a2a5c"/><stop offset=".3" stop-color="#06244a"/><stop offset=".6" stop-color="#0a1834"/><stop offset="1" stop-color="#0b0f22"/></linearGradient></defs>
   <rect width="355" height="80" fill="url(#bb)"/>
   <filter id="bl3"><feGaussianBlur stdDeviation="1.1"/></filter><filter id="bl4"><feGaussianBlur stdDeviation="0.6"/></filter>
   <g font-family="Liberation Sans,sans-serif" font-weight="bold" filter="url(#bl3)">
    <text x="12" y="44" font-size="58" fill="#168fd2" opacity=".9">0</text><text x="58" y="30" font-size="40" fill="#2bb3c4" opacity=".8">1</text><text x="56" y="66" font-size="34" fill="#39b0c0" opacity=".7">0</text><text x="84" y="40" font-size="30" fill="#1c6fb8" opacity=".7">0</text><text x="100" y="36" font-size="44" fill="#2fa9bc" opacity=".85">0</text><text x="132" y="28" font-size="34" fill="#1f86c4" opacity=".7">0</text><text x="150" y="26" font-size="32" fill="#2a9db4" opacity=".6">0</text><text x="108" y="70" font-size="30" fill="#2fa9bc" opacity=".6">0</text>
   </g>
   <g font-family="Liberation Sans,sans-serif" font-weight="bold" filter="url(#bl4)" fill="#3aa0aa" opacity=".5">
    <g font-size="11"><text x="168" y="12">0 1 0 0 1 0 1 1 0 1 0 0 1 0 1 0 0 1 0 1 1</text><text x="172" y="24">1 0 1 1 0 0 1 0 1 0 1 1 0 1 0 0 1 1 0 1 0</text><text x="168" y="36">0 0 1 0 1 1 0 1 0 0 1 0 1 0 1 1 0 0 1 0 1</text><text x="172" y="48">1 1 0 1 0 0 1 0 1 1 0 1 0 1 0 0 1 0 1 1 0</text></g>
    <text x="258" y="38" font-size="26" fill="#3aa0b0">0</text><text x="290" y="36" font-size="28" fill="#3aa0b0">0</text><text x="316" y="40" font-size="22" fill="#3aa0b0">1</text>
   </g>
   <text x="178" y="55" text-anchor="middle" font-family="'Liberation Sans','Noto Sans CJK SC',sans-serif" font-weight="bold" font-size="27" fill="#fff">新币申购</text>
  </svg>
 </div>
 <!-- tab bar -->
 <div class="abs" style="left:0;top:617px;width:375px;height:50px;background:#172540"></div>
 <svg class="abs" style="left:24px;top:622px" width="26" height="26" viewBox="0 0 26 26"><circle cx="13" cy="12.500" r="11" fill="#3f6fe0"/><circle cx="13" cy="12.500" r="7.500" fill="none" stroke="#172540" stroke-width="1.600"/><circle cx="13" cy="12.500" r="3.600" fill="none" stroke="#172540" stroke-width="1.600"/><path d="M18 20 L24 24 H14 Z" fill="#3f6fe0"/></svg>
 <svg class="abs" style="left:100px;top:623px" width="24" height="24" viewBox="0 0 24 24"><circle cx="12" cy="12" r="11" fill="#b9bfcc"/><path d="M4.500 15 L9.500 10.500 L12.500 13.500 L18.500 7.500 M14.500 7.500 H18.500 V11.500" fill="none" stroke="#172540" stroke-width="2"/></svg>
 <svg class="abs" style="left:175px;top:623px" width="24" height="24" viewBox="0 0 24 24"><circle cx="12" cy="12" r="11" fill="#c5cad5"/><path d="M6 9 A7 7 0 0 1 18.500 9 M18 15 A7 7 0 0 1 5.500 15" fill="none" stroke="#e8ebf0" stroke-width="1.600"/><path d="M9.500 8 L12 11 L14.500 8 M12 11 V16.500 M9.500 12 H14.500 M9.500 14.300 H14.500" fill="none" stroke="#e8ebf0" stroke-width="1.300"/></svg>
 <svg class="abs" style="left:250px;top:624px" width="24" height="22" viewBox="0 0 24 22"><path d="M5 5 L17 0.500 L18.500 5 Z" fill="#b9bfcc"/><path d="M1 7 A2 2 0 0 1 3 5 H21 A2 2 0 0 1 23 7 V10 H15 V16 H23 V19.500 A2 2 0 0 1 21 21.500 H3 A2 2 0 0 1 1 19.500 Z" fill="#b9bfcc"/><rect x="16.500" y="11.500" width="6.500" height="3" fill="#b9bfcc"/></svg>
 <svg class="abs" style="left:326px;top:623px" width="22" height="24" viewBox="0 0 22 24"><circle cx="11" cy="6.500" r="5.800" fill="#b9bfcc"/><path d="M0.500 23.500 C0.500 15 5 13 11 13 C17 13 21.500 15 21.500 23.500 Z" fill="#b9bfcc"/></svg>
 <div class="tbl" style="left:7px;color:#2d7fe0">首页</div>
 <div class="tbl" style="left:82px">行情</div>
 <div class="tbl" style="left:157px">交易</div>
 <div class="tbl" style="left:232px">资产</div>
 <div class="tbl" style="left:307px">我的</div>
</div>
<!-- sogou IME bar -->
<div class="abs" style="left:1790px;top:948px;width:104px;height:32px;background:#fdfdfd;border:1px solid #d6e0ee;border-radius:3px"></div>
<svg class="abs" style="left:1760px;top:941px" width="42" height="42" viewBox="0 0 42 42"><g transform="rotate(-12 21 21)"><rect x="4" y="5" width="33" height="32" rx="5" fill="#f0622a"/><path d="M29 13 C22 10.500 12 12 12 17 C12 21.500 30 19.500 30 25.500 C30 31 17 31 10 28" fill="none" stroke="#fff" stroke-width="4.200" stroke-linecap="round"/></g></svg>
<div class="abs" style="left:1808px;top:948px;font-size:26px;line-height:32px;color:#1f6fd0;font-family:'Liberation Sans',sans-serif">A</div>
<svg class="abs" style="left:1838px;top:954px" width="20" height="22" viewBox="0 0 20 22"><rect x="6.500" y="0.500" width="7" height="12" rx="3.500" fill="#1f6fd0"/><path d="M3 9 A7 7 0 0 0 17 9 M10 16 V19.500 M6.500 19.800 H13.500" fill="none" stroke="#1f6fd0" stroke-width="1.700"/></svg>
<svg class="abs" style="left:1868px;top:956px" width="20" height="17" viewBox="0 0 20 17"><rect x="1" y="1" width="18" height="14" rx="2" fill="#1f6fd0"/><path d="M3 5.500 H17 M3 8.800 H17 M5.500 3 V10.500 M9 3 V10.500 M12.500 3 V10.500 M16 3 V10.500" stroke="#fff" stroke-width="1.100"/><path d="M5 12.500 H15" stroke="#fff" stroke-width="1.400"/></svg>

<!-- ======= console ======= -->
<div class="abs" style="left:0;top:793px;width:1380px;height:200px;background:#fffdf6"></div>
<div class="abs" style="left:22px;top:815px;font-size:18.3px;line-height:24px;color:#111;white-space:nowrap">H5laoban - H5</div>
<div class="abs" style="left:17px;top:842px;width:152px;height:1px;background:#41a863"></div>
<div class="abs" style="left:0;top:793px;width:1380px;height:200px;overflow:hidden">
<div class="cs" style="top:68px"><span style="color:#e07b1a">[<span class="z">广告</span>] </span><span style="color:#6a6f73">16:35:35.419 </span><span style="color:#e07b1a"><b>uni-cdn</b><span class="z">，帮你节省至少</span><b>30%</b><span class="z">的</span> <b>CDN</b> <span class="z">费用！</span></span><span class="z" style="color:#1a237e;text-decoration:underline">详情</span></div>
<div class="cs" style="top:92px">16:35:38.835 <span class="z">项目</span> 'H5laoban' <span class="z">开始编译</span>...</div>
<div class="cs" style="top:116px">16:35:53.162 <span class="z">请注意运行模式下，因日志输出、</span>sourcemap<span class="z">以及未压缩源码等原因，性能和包体积，均不及发行模式。</span></div>
<div class="cs" style="top:140px">16:35:54.356 <span class="z">正在编译中</span>...</div>
<div class="cs" style="top:164px">16:36:03.224  INFO  Starting development server...</div>
<div class="cs" style="top:188px">16:36:39.101 WARNING: Module Warning (from ./node_modules/@dcloudio/vue-cli-plugin-uni/packages/vue-loader/lib/loaders/t</div>
</div>
<!-- console tools -->
<svg class="abs" style="left:1192px;top:818px" width="176" height="18" viewBox="0 0 176 18">
 <g fill="none" stroke="#e08a80" stroke-width="1"><path d="M6.500 6 C6.500 3 12.500 3 12.500 6 V11 C12.500 15.500 6.500 15.500 6.500 11 Z M9.500 5 V14.500 M6.500 2 L7.500 4 M12.500 2 L11.500 4 M3 5.500 L6.500 7 M16 5.500 L12.500 7 M3 9.500 H6.500 M16 9.500 H12.500 M3.500 14 L6.500 12 M15.500 14 L12.500 12"/></g>
 <g fill="none" stroke="#9ab8b0" stroke-width="1.100"><path d="M36.500 4.500 A5.800 5.800 0 1 1 35 9 M34 3 L36.700 4.600 L35.500 7.500"/><path d="M39 6 L44 9 L39 12 Z" fill="#9ab8b0"/></g>
 <rect x="66.500" y="3.500" width="11" height="11" fill="none" stroke="#c9706a" stroke-width="1"/><rect x="68.500" y="5.500" width="7" height="7" fill="#c9706a"/>
 <g fill="none" stroke="#b09a58" stroke-width="1.100"><path d="M106 3.500 H96.500 V14.500 H109.500 V8 M99 7 L101.500 9 L99 11 M103 11.500 H106.500 M109.500 1 V6 M107 3.500 H112"/></g>
 <path d="M127.500 12 L133.500 6 L139.500 12" fill="none" stroke="#8a7a44" stroke-width="1.300"/>
 <g fill="none" stroke="#6e5f30" stroke-width="1.300"><path d="M158.500 5 L164.500 13 M164.500 5 L158.500 13 M169.500 4.500 V13 M167 10.500 L169.500 13 L172 10.500"/></g>
</svg>
<div class="abs" style="left:1372px;top:861px;width:8px;height:21px;background:#d3b866"></div>

<!-- ======= status bar ======= -->
<div class="abs" style="left:0;top:993px;width:1920px;height:28px;background:#fffdf6;border-top:1px solid #dcd2aa"></div>
<svg class="abs" style="left:27px;top:1000px" width="15" height="15" viewBox="0 0 15 15"><circle cx="7.500" cy="7.500" r="6.700" fill="none" stroke="#3fa761" stroke-width="1.200"/><circle cx="7.500" cy="5.500" r="2.300" fill="#3fa761"/><path d="M3 12 C3 8.500 12 8.500 12 12 Z" fill="#3fa761"/></svg>
<div class="abs" style="left:48px;top:997px;font-size:16px;line-height:22px;color:#3fa761;letter-spacing:0.25px;white-space:nowrap">289021941@qq.com</div>
<svg class="abs" style="left:266px;top:1001px" width="14" height="12" viewBox="0 0 14 12"><path d="M1 1.500 H3 M1 6 H3 M1 10.500 H3 M5 1.500 H13.500 M5 6 H13.500 M5 10.500 H13.500" stroke="#9a8f68" stroke-width="1.300"/></svg>
<svg class="abs" style="left:297px;top:1001px" width="15" height="12" viewBox="0 0 15 12"><rect x="0.600" y="0.600" width="13.500" height="10.500" fill="none" stroke="#9a8f68" stroke-width="1.100"/><path d="M3 3.500 L5.500 5.800 L3 8 M7 8.500 H10.500" fill="none" stroke="#9a8f68" stroke-width="1.100"/></svg>
<div class="abs" style="left:1613px;top:997px;font-size:16px;line-height:22px;color:#555a5e;white-space:nowrap">行:210&nbsp; 列:1</div>
<div class="abs" style="left:1723px;top:997px;font-size:16px;line-height:22px;color:#555a5e;white-space:nowrap">UTF-8</div>
<div class="abs" style="left:1792px;top:997px;font-size:16px;line-height:22px;color:#555a5e;white-space:nowrap">Vue</div>
<svg class="abs" style="left:1843px;top:997px" width="22" height="20" viewBox="0 0 22 20"><circle cx="9" cy="11" r="8" fill="#b5a67a"/><path d="M9 6.500 V14 M6 11.500 L9 14.500 L12 11.500" fill="none" stroke="#fff" stroke-width="1.500"/><circle cx="16.500" cy="4.500" r="3.300" fill="#ea3a30"/></svg>
<svg class="abs" style="left:1880px;top:999px" width="14" height="16" viewBox="0 0 14 16"><path d="M7 1 C3.500 1 2.500 4 2.500 7 C2.500 10 1 11 0.500 12 H13.500 C13 11 11.500 10 11.500 7 C11.500 4 10.500 1 7 1 Z" fill="#b5a67a"/><path d="M5 13.500 A2 2 0 0 0 9 13.500 Z" fill="#b5a67a"/></svg>
<!-- taskbar sliver -->
<div class="abs" style="left:0;top:1021px;width:1920px;height:8px;background:linear-gradient(90deg,#e4e6f2,#dfe4f3 40%,#d5def3 70%,#d9e0f2)"></div>

</body>
</html>
